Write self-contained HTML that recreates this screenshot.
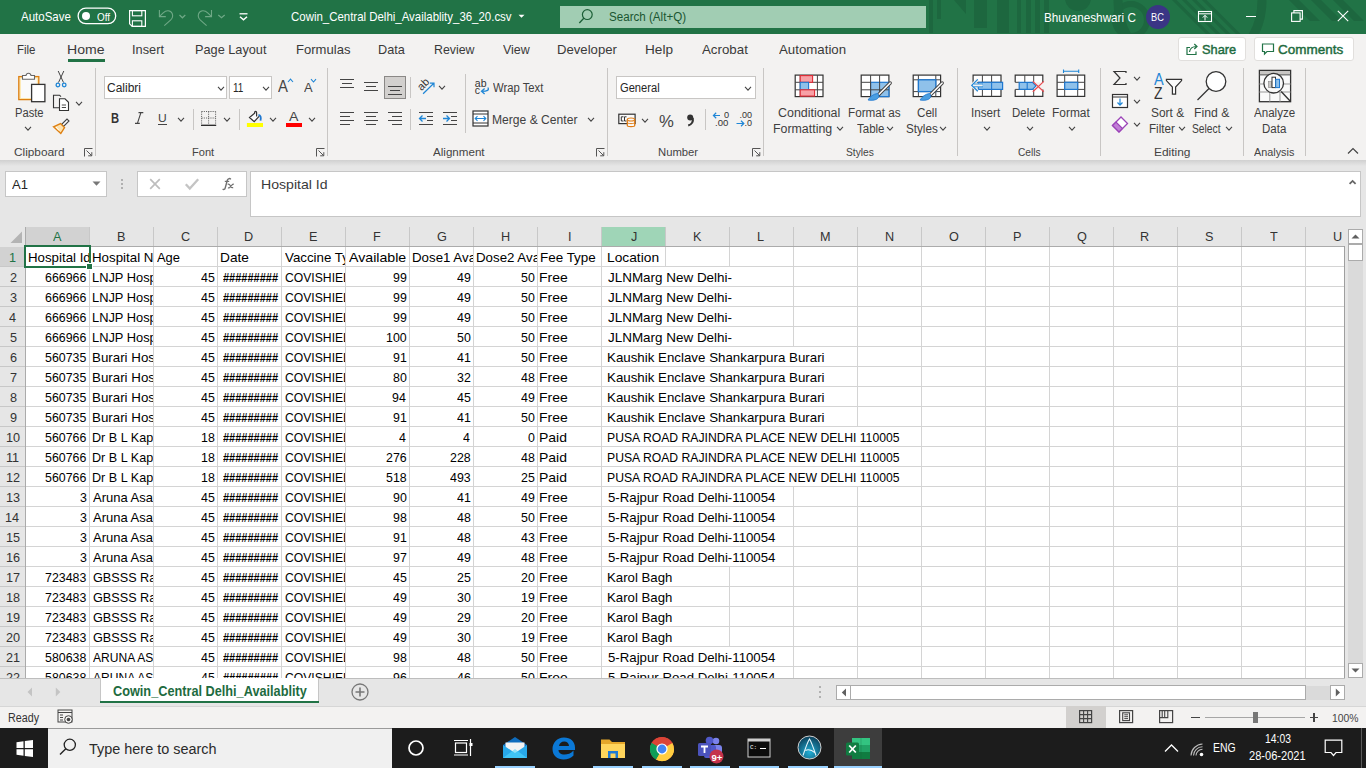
<!DOCTYPE html>
<html><head><meta charset="utf-8"><title>Excel</title>
<style>
html,body{margin:0;padding:0;width:1366px;height:768px;overflow:hidden;background:#fff;}
body{position:relative;font-family:'Liberation Sans', sans-serif;}
div,svg,span{box-sizing:border-box;}
body div{position:absolute;}
.t{position:absolute;white-space:pre;line-height:1;transform-origin:0 0;}
</style></head><body>
<div style="left:0px;top:0px;width:1366px;height:34px;background:#217346;"></div>
<div style="left:0px;top:34px;width:1366px;height:126px;background:#f3f2f1;"></div>
<div style="left:0px;top:160px;width:1366px;height:68px;background:#e6e6e6;"></div>
<div style="left:0;top:160px;width:1366px;height:6px;background:linear-gradient(#d0d0d0,#e6e6e6)"></div>
<div style="left:0px;top:227px;width:1366px;height:451px;background:#e6e6e6;"></div>
<div style="left:0px;top:678px;width:1366px;height:28px;background:#e6e6e6;"></div>
<div style="left:0px;top:706px;width:1366px;height:22px;background:#f3f2f1;"></div>
<div style="left:0px;top:728px;width:1366px;height:40px;background:#1c1c1c;"></div>
<svg style="position:absolute;left:0px;top:0px;" width="1366" height="34" viewBox="0 0 1366 34"><g opacity="0.85"><rect x="929" y="0" width="4" height="33" fill="#1d653e"/><rect x="937" y="0" width="4" height="19" fill="#1d653e"/><rect x="974" y="0" width="13" height="28" fill="#1d653e"/><rect x="997" y="0" width="12" height="33" fill="#1d653e"/><rect x="1017" y="0" width="4" height="33" fill="#1d653e"/><rect x="1026" y="0" width="5" height="33" fill="#1d653e"/><rect x="1035" y="0" width="5" height="33" fill="#1d653e"/><rect x="1044" y="0" width="5" height="33" fill="#1d653e"/><path d="M954 0 L966 0 L966 14 Z" fill="#1d653e"/><circle cx="1078" cy="-2" r="13" fill="#1d653e"/><circle cx="1131" cy="20" r="16" fill="none" stroke="#1d653e" stroke-width="6"/><path d="M1172 0 L1176.5 0 L1210.5 34 L1206 34 Z" fill="#1d653e"/><path d="M1182 0 L1186.5 0 L1220.5 34 L1216 34 Z" fill="#1d653e"/><path d="M1192 0 L1196.5 0 L1230.5 34 L1226 34 Z" fill="#1d653e"/><path d="M1202 0 L1206.5 0 L1240.5 34 L1236 34 Z" fill="#1d653e"/><circle cx="1190" cy="0.5" r="72" fill="none" stroke="#1d653e" stroke-width="9"/><path d="M1289 0 L1299 0 L1320 21 L1310 21 Z" fill="#1d653e"/><path d="M1311 0 L1321 0 L1342 21 L1332 21 Z" fill="#1d653e"/><path d="M1333 0 L1343 0 L1364 21 L1354 21 Z" fill="#1d653e"/></g></svg>
<span class="t" style="left:21.00px;top:10.30px;font-size:13px;color:#ffffff;transform:scaleX(0.8852);">AutoSave</span>
<svg style="position:absolute;left:77px;top:7px;" width="40" height="18" viewBox="0 0 40 18"><rect x="1.1" y="1.1" width="37.6" height="15.6" rx="7.8" fill="none" stroke="#fff" stroke-width="1.3"/><circle cx="9" cy="9" r="4" fill="#fff"/></svg>
<span class="t" style="left:97.10px;top:12.90px;font-size:10px;color:#ffffff;transform:scaleX(0.9868);">Off</span>
<svg style="position:absolute;left:128px;top:9px;" width="19" height="19" viewBox="0 0 19 19"><path d="M1.6 1.6 H17.4 V17.4 H4.2 L1.6 14.8 Z" fill="none" stroke="#fff" stroke-width="1.2"/><rect x="4.4" y="1.6" width="9.4" height="5.2" fill="none" stroke="#fff" stroke-width="1.1"/><rect x="4.4" y="11.8" width="9.4" height="5.6" fill="none" stroke="#fff" stroke-width="1.1"/></svg>
<svg style="position:absolute;left:150px;top:4px;" width="80" height="28" viewBox="0 0 80 28"><path d="M9.4 5.9 V12.6 H15.8" fill="none" stroke="#6fa886" stroke-width="1.1"/><path d="M9.8 12.2 L13.2 8.8 C16 6 20.5 5.8 22.2 9.5 C23.2 12 22.2 14.5 20.5 16.2 L14.3 21.7" fill="none" stroke="#6fa886" stroke-width="1.1"/><g transform="translate(70.9 0) scale(-1 1)"><path d="M9.4 5.9 V12.6 H15.8" fill="none" stroke="#6fa886" stroke-width="1.1"/><path d="M9.8 12.2 L13.2 8.8 C16 6 20.5 5.8 22.2 9.5 C23.2 12 22.2 14.5 20.5 16.2 L14.3 21.7" fill="none" stroke="#6fa886" stroke-width="1.1"/></g><path d="M29.5 11 L32.4 13.8 L35.3 11 M68.3 11 L71.5 13.8 L74.7 11" fill="none" stroke="#6fa886" stroke-width="1.2"/></svg>
<svg style="position:absolute;left:238px;top:12px;" width="11" height="10" viewBox="0 0 11 10"><path d="M1.5 1.8 H9.5" stroke="#fff" stroke-width="1.3"/><path d="M2 4.8 L5.5 7.8 L9 4.8" fill="none" stroke="#fff" stroke-width="1.5"/></svg>
<span class="t" style="left:291.00px;top:9.50px;font-size:13px;color:#ffffff;transform:scaleX(0.8804);">Cowin_Central Delhi_Availablity_36_20.csv</span>
<svg style="position:absolute;left:518px;top:14px;" width="7" height="5" viewBox="0 0 7 5"><path d="M0.5 0.8 H6.5 L3.5 3.8 Z" fill="#fff"/></svg>
<div style="left:560px;top:6px;width:366px;height:22px;background:#a1cdb3;"></div>
<svg style="position:absolute;left:577px;top:8px;" width="18" height="18" viewBox="0 0 18 18"><circle cx="10.3" cy="6.6" r="4.9" fill="none" stroke="#1b5e36" stroke-width="1.2"/><path d="M6.8 10.2 L2.3 15" stroke="#1b5e36" stroke-width="1.3"/></svg>
<span class="t" style="left:609.30px;top:10.50px;font-size:12.5px;color:#1b5631;transform:scaleX(0.9282);">Search (Alt+Q)</span>
<span class="t" style="left:1043.58px;top:11.80px;font-size:12.8px;color:#ffffff;transform:scaleX(0.9157);">Bhuvaneshwari C</span>
<svg style="position:absolute;left:1146px;top:5px;" width="24" height="24" viewBox="0 0 24 24"><circle cx="12" cy="12" r="12" fill="#3a3585"/></svg>
<span class="t" style="left:1151.30px;top:12.00px;font-size:11.3px;color:#ffffff;transform:scaleX(0.8175);">BC</span>
<svg style="position:absolute;left:1197px;top:10px;" width="16" height="13" viewBox="0 0 16 13"><rect x="1.5" y="1.5" width="13" height="10" fill="none" stroke="#fff" stroke-width="1.1"/><path d="M1.5 3.8 H14.5" stroke="#fff" stroke-width="1"/><path d="M8 10.5 V5.5 M5.8 7.6 L8 5.3 L10.2 7.6" fill="none" stroke="#fff" stroke-width="1"/></svg>
<div style="left:1246px;top:16px;width:10px;height:1px;background:#ffffff;"></div>
<svg style="position:absolute;left:1291px;top:10px;" width="12" height="12" viewBox="0 0 12 12"><rect x="0.6" y="2.9" width="8.5" height="8.5" fill="none" stroke="#fff" stroke-width="1.1"/><path d="M2.9 2.9 V0.6 H11.4 V9.1 H9.1" fill="none" stroke="#fff" stroke-width="1.1"/></svg>
<svg style="position:absolute;left:1337px;top:10px;" width="12" height="12" viewBox="0 0 12 12"><path d="M0.8 0.8 L11.2 11.2 M11.2 0.8 L0.8 11.2" stroke="#fff" stroke-width="1.1"/></svg>
<span class="t" style="left:16.70px;top:44.00px;font-size:12.8px;color:#3a3a3a;transform:scaleX(0.8973);">File</span>
<span class="t" style="left:67.40px;top:44.00px;font-size:12.8px;color:#3a3a3a;transform:scaleX(1.0994);">Home</span>
<span class="t" style="left:132.30px;top:44.00px;font-size:12.8px;color:#3a3a3a;transform:scaleX(0.9984);">Insert</span>
<span class="t" style="left:195.01px;top:44.00px;font-size:12.8px;color:#3a3a3a;transform:scaleX(0.9943);">Page Layout</span>
<span class="t" style="left:295.98px;top:44.00px;font-size:12.8px;color:#3a3a3a;transform:scaleX(1.0206);">Formulas</span>
<span class="t" style="left:378.01px;top:44.00px;font-size:12.8px;color:#3a3a3a;transform:scaleX(0.9921);">Data</span>
<span class="t" style="left:434.03px;top:44.00px;font-size:12.8px;color:#3a3a3a;transform:scaleX(0.9660);">Review</span>
<span class="t" style="left:503.00px;top:44.00px;font-size:12.8px;color:#3a3a3a;transform:scaleX(0.9730);">View</span>
<span class="t" style="left:556.97px;top:44.00px;font-size:12.8px;color:#3a3a3a;transform:scaleX(1.0264);">Developer</span>
<span class="t" style="left:644.94px;top:44.00px;font-size:12.8px;color:#3a3a3a;transform:scaleX(1.0634);">Help</span>
<span class="t" style="left:701.70px;top:44.00px;font-size:12.8px;color:#3a3a3a;transform:scaleX(1.0394);">Acrobat</span>
<span class="t" style="left:779.00px;top:44.00px;font-size:12.8px;color:#3a3a3a;transform:scaleX(1.0369);">Automation</span>
<div style="left:68px;top:59px;width:37px;height:3px;background:#217346;"></div>
<div style="left:1178px;top:37px;width:68px;height:24px;background:#fff;border:1px solid #e1dfdd;border-radius:3px"></div>
<div style="left:1254px;top:37px;width:100px;height:24px;background:#fff;border:1px solid #e1dfdd;border-radius:3px"></div>
<svg style="position:absolute;left:1185px;top:42px;" width="14" height="14" viewBox="0 0 14 14"><path d="M5 5.5 H2 V12.5 H11 V9.5" fill="none" stroke="#217346" stroke-width="1.2"/><path d="M4.5 10 C5 6 8 4.5 11.5 4.5 M9.3 2 L12 4.5 L9.3 7" fill="none" stroke="#217346" stroke-width="1.2"/></svg>
<span class="t" style="left:1202.00px;top:43.00px;font-size:13.5px;color:#1e6b40;transform:scaleX(0.9489);-webkit-text-stroke:0.45px #1e6b40">Share</span>
<svg style="position:absolute;left:1261px;top:42px;" width="14" height="14" viewBox="0 0 14 14"><path d="M1.5 2 H12.5 V9.5 H6 L3.5 12 V9.5 H1.5 Z" fill="none" stroke="#217346" stroke-width="1.2"/></svg>
<span class="t" style="left:1278.00px;top:43.00px;font-size:13.5px;color:#1e6b40;transform:scaleX(0.9982);-webkit-text-stroke:0.45px #1e6b40">Comments</span>
<div style="left:95px;top:68px;width:1px;height:88px;background:#c8c6c4;"></div>
<div style="left:327px;top:68px;width:1px;height:88px;background:#c8c6c4;"></div>
<div style="left:607px;top:68px;width:1px;height:88px;background:#c8c6c4;"></div>
<div style="left:763px;top:68px;width:1px;height:88px;background:#c8c6c4;"></div>
<div style="left:957px;top:68px;width:1px;height:88px;background:#c8c6c4;"></div>
<div style="left:1100px;top:68px;width:1px;height:88px;background:#c8c6c4;"></div>
<div style="left:1243px;top:68px;width:1px;height:88px;background:#c8c6c4;"></div>
<div style="left:1305px;top:68px;width:1px;height:88px;background:#c8c6c4;"></div>
<span class="t" style="left:14.30px;top:146.80px;font-size:11.5px;color:#444;transform:scaleX(1.0261);">Clipboard</span>
<span class="t" style="left:191.60px;top:146.80px;font-size:11.5px;color:#444;transform:scaleX(0.9615);">Font</span>
<span class="t" style="left:433.30px;top:146.80px;font-size:11.5px;color:#444;transform:scaleX(1.0088);">Alignment</span>
<span class="t" style="left:657.50px;top:146.80px;font-size:11.5px;color:#444;transform:scaleX(0.9812);">Number</span>
<span class="t" style="left:846.40px;top:146.80px;font-size:11.5px;color:#444;transform:scaleX(0.8902);">Styles</span>
<span class="t" style="left:1017.60px;top:146.80px;font-size:11.5px;color:#444;transform:scaleX(0.8872);">Cells</span>
<span class="t" style="left:1153.50px;top:146.80px;font-size:11.5px;color:#444;transform:scaleX(1.0383);">Editing</span>
<span class="t" style="left:1253.80px;top:146.80px;font-size:11.5px;color:#444;transform:scaleX(0.9426);">Analysis</span>
<svg style="position:absolute;left:84px;top:147.5px;" width="9" height="9" viewBox="0 0 9 9"><path d="M0.5 8.5 V0.5 H8.5" fill="none" stroke="#555" stroke-width="1"/><path d="M2.5 2.5 L7.8 7.8 M4.2 7.8 H7.8 V4.2" fill="none" stroke="#555" stroke-width="1"/></svg>
<svg style="position:absolute;left:316px;top:147.5px;" width="9" height="9" viewBox="0 0 9 9"><path d="M0.5 8.5 V0.5 H8.5" fill="none" stroke="#555" stroke-width="1"/><path d="M2.5 2.5 L7.8 7.8 M4.2 7.8 H7.8 V4.2" fill="none" stroke="#555" stroke-width="1"/></svg>
<svg style="position:absolute;left:596px;top:147.5px;" width="9" height="9" viewBox="0 0 9 9"><path d="M0.5 8.5 V0.5 H8.5" fill="none" stroke="#555" stroke-width="1"/><path d="M2.5 2.5 L7.8 7.8 M4.2 7.8 H7.8 V4.2" fill="none" stroke="#555" stroke-width="1"/></svg>
<svg style="position:absolute;left:752px;top:147.5px;" width="9" height="9" viewBox="0 0 9 9"><path d="M0.5 8.5 V0.5 H8.5" fill="none" stroke="#555" stroke-width="1"/><path d="M2.5 2.5 L7.8 7.8 M4.2 7.8 H7.8 V4.2" fill="none" stroke="#555" stroke-width="1"/></svg>
<svg style="position:absolute;left:1347px;top:147px;" width="12" height="8" viewBox="0 0 12 8"><path d="M1 6.5 L6 1.5 L11 6.5" fill="none" stroke="#444" stroke-width="1.2"/></svg>
<svg style="position:absolute;left:16px;top:70px;" width="32" height="34" viewBox="0 0 32 34"><rect x="2.8" y="6.6" width="20" height="23" fill="#fde9b4" stroke="#dc7f12" stroke-width="1.3"/><rect x="5" y="8.5" width="15.8" height="19.5" fill="#fafafa"/><path d="M6.5 9.2 V5.5 H10 C10.5 2.5 14.5 2.5 15 5.5 H18.5 V9.2 Z" fill="#fff" stroke="#666" stroke-width="1.1"/><rect x="15.6" y="14.4" width="13.3" height="17.3" fill="#fff" stroke="#333" stroke-width="1.3"/></svg>
<span class="t" style="left:14.71px;top:106.60px;font-size:12.5px;color:#404040;transform:scaleX(0.8932);">Paste</span>
<svg style="position:absolute;left:24.4px;top:125.8px;" width="8" height="5.2" viewBox="0 0 8 5.2"><path d="M1 1 L4.0 4.2 L7 1" fill="none" stroke="#444" stroke-width="1.1"/></svg>
<svg style="position:absolute;left:54px;top:70px;" width="14" height="18" viewBox="0 0 14 18"><path d="M4.2 1 L9.5 12.5 M9.8 1 L4.5 12.5" stroke="#444" stroke-width="1"/><circle cx="3.9" cy="15" r="1.8" fill="none" stroke="#1f86d6" stroke-width="1.3"/><circle cx="10.2" cy="15" r="1.8" fill="none" stroke="#1f86d6" stroke-width="1.3"/></svg>
<svg style="position:absolute;left:52px;top:94px;" width="18" height="18" viewBox="0 0 18 18"><path d="M8.5 13.8 H1.5 V1.2 H7.5 L9 2.7" fill="none" stroke="#333" stroke-width="1.1"/><path d="M7.5 4.8 H13 L16.5 8.3 V16.5 H7.5 Z" fill="#fff" stroke="#333" stroke-width="1.1"/><path d="M9.8 11 H14 M9.8 13.5 H14" stroke="#333" stroke-width="0.9"/></svg>
<svg style="position:absolute;left:74.5px;top:101px;" width="8" height="5.2" viewBox="0 0 8 5.2"><path d="M1 1 L4.0 4.2 L7 1" fill="none" stroke="#444" stroke-width="1.1"/></svg>
<svg style="position:absolute;left:52px;top:117px;" width="18" height="18" viewBox="0 0 18 18"><path d="M9.5 7.5 L15 2 L17 4 L11.5 9.5 Z" fill="#fff" stroke="#444" stroke-width="1.1"/><path d="M1.5 9.8 L8.5 6.5 L12.5 10.5 L8.8 16.5 Z" fill="#fde3b0" stroke="#de7f10" stroke-width="1.4"/><path d="M4 10 L7 13.5" stroke="#fff" stroke-width="1"/></svg>
<div style="left:104px;top:76px;width:123px;height:23px;background:#fff;border:1px solid #c8c6c4"></div>
<span class="t" style="left:107.40px;top:81.60px;font-size:12px;color:#262626;transform:scaleX(0.9987);">Calibri</span>
<svg style="position:absolute;left:216.6px;top:85.6px;" width="8" height="5.2" viewBox="0 0 8 5.2"><path d="M1 1 L4.0 4.2 L7 1" fill="none" stroke="#444" stroke-width="1.1"/></svg>
<div style="left:229px;top:76px;width:43px;height:23px;background:#fff;border:1px solid #c8c6c4"></div>
<span class="t" style="left:232.80px;top:81.60px;font-size:12px;color:#262626;transform:scaleX(0.8292);">11</span>
<svg style="position:absolute;left:261.6px;top:85.6px;" width="8" height="5.2" viewBox="0 0 8 5.2"><path d="M1 1 L4.0 4.2 L7 1" fill="none" stroke="#444" stroke-width="1.1"/></svg>
<span class="t" style="left:278.10px;top:77.60px;font-size:17px;color:#444;transform:scaleX(0.8750);">A</span>
<svg style="position:absolute;left:287px;top:78px;" width="7" height="5" viewBox="0 0 7 5"><path d="M1 4 L3.5 1.2 L6 4" fill="none" stroke="#1f86d6" stroke-width="1.1"/></svg>
<span class="t" style="left:303.80px;top:81.60px;font-size:12px;color:#444;transform:scaleX(1.0750);">A</span>
<svg style="position:absolute;left:310px;top:78px;" width="7" height="5" viewBox="0 0 7 5"><path d="M1 1.2 L3.5 4 L6 1.2" fill="none" stroke="#1f86d6" stroke-width="1.1"/></svg>
<span class="t" style="left:111.30px;top:111.00px;font-size:14px;color:#333;font-weight:700;transform:scaleX(0.8000);">B</span>
<svg style="position:absolute;left:133px;top:111px;" width="12" height="14" viewBox="0 0 12 14"><path d="M5.5 1.6 H10.3 M2 12.4 H6.8 M7.9 1.6 L4.4 12.4" fill="none" stroke="#444" stroke-width="1.1"/></svg>
<span class="t" style="left:158.20px;top:112.70px;font-size:11.5px;color:#444;transform:scaleX(1.0500);">U</span>
<div style="left:158px;top:124px;width:9px;height:1.2px;background:#444;"></div>
<svg style="position:absolute;left:176.5px;top:117.2px;" width="8" height="5.2" viewBox="0 0 8 5.2"><path d="M1 1 L4.0 4.2 L7 1" fill="none" stroke="#444" stroke-width="1.1"/></svg>
<div style="left:193px;top:109px;width:1px;height:21px;background:#c8c6c4;"></div>
<svg style="position:absolute;left:200px;top:110px;" width="17" height="17" viewBox="0 0 17 17"><path d="M1.6 1.5 H15.6 M1.6 1.5 V14.5 M15.6 1.5 V14.5 M8.6 1.5 V14.5 M1.6 8 H15.6" fill="none" stroke="#555" stroke-width="0.9" stroke-dasharray="1.1 1.1"/><path d="M1 15.3 H16.2" stroke="#222" stroke-width="1.3"/></svg>
<svg style="position:absolute;left:222.5px;top:117.2px;" width="8" height="5.2" viewBox="0 0 8 5.2"><path d="M1 1 L4.0 4.2 L7 1" fill="none" stroke="#444" stroke-width="1.1"/></svg>
<div style="left:239px;top:109px;width:1px;height:21px;background:#c8c6c4;"></div>
<svg style="position:absolute;left:245px;top:108px;" width="20" height="20" viewBox="0 0 20 20"><path d="M4.5 9.5 L9.6 5.3 L14.3 8.2 L9.2 13.6 Z" fill="#fafafa"/><path d="M11.6 8.5 V4.5 C11.6 3.1 9.6 3.1 9.6 4.5 V5.3 L4.5 9.5 L9.2 13.6 L14.3 8.2" fill="none" stroke="#333" stroke-width="1.2"/><path d="M13.5 7 C15.5 7.2 16.3 9 15.5 12.6" fill="none" stroke="#1f78d0" stroke-width="1.8"/><rect x="1.9" y="15" width="16.1" height="4" fill="#ffff00"/></svg>
<svg style="position:absolute;left:268.5px;top:117.2px;" width="8" height="5.2" viewBox="0 0 8 5.2"><path d="M1 1 L4.0 4.2 L7 1" fill="none" stroke="#444" stroke-width="1.1"/></svg>
<span class="t" style="left:289.20px;top:110.40px;font-size:13px;color:#444;transform:scaleX(1.0889);">A</span>
<div style="left:286px;top:123px;width:16px;height:3.5px;background:#ff0000;"></div>
<svg style="position:absolute;left:307.5px;top:117.2px;" width="8" height="5.2" viewBox="0 0 8 5.2"><path d="M1 1 L4.0 4.2 L7 1" fill="none" stroke="#444" stroke-width="1.1"/></svg>
<div style="left:340px;top:78.8px;width:14px;height:1.3px;background:#444;"></div>
<div style="left:342px;top:82.9px;width:10px;height:1.3px;background:#444;"></div>
<div style="left:340px;top:87px;width:14px;height:1.3px;background:#444;"></div>
<div style="left:364px;top:81.8px;width:14px;height:1.3px;background:#444;"></div>
<div style="left:366px;top:85.9px;width:10px;height:1.3px;background:#444;"></div>
<div style="left:364px;top:90px;width:14px;height:1.3px;background:#444;"></div>
<div style="left:384px;top:76px;width:22px;height:23px;background:#d2d0ce;border:1px solid #8a8886"></div>
<div style="left:388px;top:85.9px;width:14px;height:1.3px;background:#444;"></div>
<div style="left:390px;top:90px;width:10px;height:1.3px;background:#444;"></div>
<div style="left:388px;top:94px;width:14px;height:1.3px;background:#444;"></div>
<div style="left:410px;top:77px;width:1px;height:21px;background:#c8c6c4;"></div>
<svg style="position:absolute;left:416px;top:77px;" width="20" height="20" viewBox="0 0 20 20"><text x="0" y="0" transform="translate(5.4 14.2) rotate(-45)" font-family="Liberation Sans" font-size="11" fill="#333">ab</text><path d="M7.1 16.7 L17.6 6.5 M13.9 6.1 H18 V10.2" fill="none" stroke="#1f86d6" stroke-width="1.2"/></svg>
<svg style="position:absolute;left:437.6px;top:85px;" width="8" height="5.2" viewBox="0 0 8 5.2"><path d="M1 1 L4.0 4.2 L7 1" fill="none" stroke="#444" stroke-width="1.1"/></svg>
<div style="left:340px;top:111.8px;width:14px;height:1.3px;background:#444;"></div>
<div style="left:340px;top:115.8px;width:10px;height:1.3px;background:#444;"></div>
<div style="left:340px;top:119.8px;width:14px;height:1.3px;background:#444;"></div>
<div style="left:340px;top:123.8px;width:10px;height:1.3px;background:#444;"></div>
<div style="left:364px;top:111.8px;width:14px;height:1.3px;background:#444;"></div>
<div style="left:366px;top:115.8px;width:10px;height:1.3px;background:#444;"></div>
<div style="left:364px;top:119.8px;width:14px;height:1.3px;background:#444;"></div>
<div style="left:366px;top:123.8px;width:10px;height:1.3px;background:#444;"></div>
<div style="left:388px;top:111.8px;width:14px;height:1.3px;background:#444;"></div>
<div style="left:392px;top:115.8px;width:10px;height:1.3px;background:#444;"></div>
<div style="left:388px;top:119.8px;width:14px;height:1.3px;background:#444;"></div>
<div style="left:392px;top:123.8px;width:10px;height:1.3px;background:#444;"></div>
<div style="left:410px;top:109px;width:1px;height:21px;background:#c8c6c4;"></div>
<div style="left:419px;top:111.8px;width:14px;height:1.3px;background:#444;"></div>
<div style="left:427px;top:115.8px;width:6px;height:1.3px;background:#444;"></div>
<div style="left:427px;top:119.8px;width:6px;height:1.3px;background:#444;"></div>
<div style="left:419px;top:123.8px;width:14px;height:1.3px;background:#444;"></div>
<svg style="position:absolute;left:418px;top:114px;" width="9" height="9" viewBox="0 0 9 9"><path d="M8 4.5 H1.5 M4.5 1.5 L1.5 4.5 L4.5 7.5" fill="none" stroke="#1f86d6" stroke-width="1.3"/></svg>
<div style="left:443px;top:111.8px;width:14px;height:1.3px;background:#444;"></div>
<div style="left:451px;top:115.8px;width:6px;height:1.3px;background:#444;"></div>
<div style="left:451px;top:119.8px;width:6px;height:1.3px;background:#444;"></div>
<div style="left:443px;top:123.8px;width:14px;height:1.3px;background:#444;"></div>
<svg style="position:absolute;left:442px;top:114px;" width="9" height="9" viewBox="0 0 9 9"><path d="M1 4.5 H7.5 M4.5 1.5 L7.5 4.5 L4.5 7.5" fill="none" stroke="#1f86d6" stroke-width="1.3"/></svg>
<div style="left:465px;top:74px;width:1px;height:59px;background:#c8c6c4;"></div>
<svg style="position:absolute;left:474px;top:77px;" width="16" height="18" viewBox="0 0 16 18"><text x="0.8" y="9.6" font-family="Liberation Sans" font-size="10.5" fill="#333">ab</text><text x="0.8" y="16.6" font-family="Liberation Sans" font-size="10.5" fill="#333">c</text><path d="M13.8 10.5 C15.5 13 13.5 14.3 7.8 14.3 M10.6 11.5 L7.5 14.3 L10.6 17.1" fill="none" stroke="#1f86d6" stroke-width="1.3"/></svg>
<span class="t" style="left:492.70px;top:82.00px;font-size:12.5px;color:#404040;transform:scaleX(0.9016);">Wrap Text</span>
<svg style="position:absolute;left:472px;top:110px;" width="17" height="17" viewBox="0 0 17 17"><rect x="1" y="1" width="15" height="15" fill="#fff" stroke="#333" stroke-width="1.2"/><path d="M1 4 H16 M1 13 H16" stroke="#333" stroke-width="1"/><path d="M3 8.5 H14 M5.5 6.2 L3.2 8.5 L5.5 10.8 M11.5 6.2 L13.8 8.5 L11.5 10.8" fill="none" stroke="#1f86d6" stroke-width="1.1"/></svg>
<span class="t" style="left:491.73px;top:113.50px;font-size:12.5px;color:#404040;transform:scaleX(0.9682);">Merge &amp; Center</span>
<svg style="position:absolute;left:586.5px;top:116.5px;" width="8" height="5.2" viewBox="0 0 8 5.2"><path d="M1 1 L4.0 4.2 L7 1" fill="none" stroke="#444" stroke-width="1.1"/></svg>
<div style="left:616px;top:76px;width:140px;height:23px;background:#fff;border:1px solid #c8c6c4"></div>
<span class="t" style="left:619.50px;top:81.60px;font-size:12px;color:#262626;transform:scaleX(0.9280);">General</span>
<svg style="position:absolute;left:744px;top:86px;" width="8" height="5.2" viewBox="0 0 8 5.2"><path d="M1 1 L4.0 4.2 L7 1" fill="none" stroke="#444" stroke-width="1.1"/></svg>
<svg style="position:absolute;left:617px;top:112px;" width="20" height="16" viewBox="0 0 20 16"><rect x="1.8" y="2.2" width="16.3" height="9.4" fill="#fafafa" stroke="#333" stroke-width="1.2"/><path d="M6.5 4.8 H4.3 V9 H6.5 M9.5 4.8 H7.5 V9 H9.5" fill="none" stroke="#333" stroke-width="1"/><path d="M10.3 7.5 V13.5 C10.3 15 17.7 15 17.7 13.5 V7.5" fill="#fafafa" stroke="#e07a10" stroke-width="1.2"/><ellipse cx="14" cy="7.5" rx="3.7" ry="1.5" fill="#fafafa" stroke="#e07a10" stroke-width="1.1"/><path d="M10.3 10.5 C10.3 12 17.7 12 17.7 10.5" fill="none" stroke="#e07a10" stroke-width="1"/></svg>
<svg style="position:absolute;left:640.5px;top:117.5px;" width="8" height="5.2" viewBox="0 0 8 5.2"><path d="M1 1 L4.0 4.2 L7 1" fill="none" stroke="#444" stroke-width="1.1"/></svg>
<span class="t" style="left:658.60px;top:113.50px;font-size:16px;color:#444;transform:scaleX(1.0429);">%</span>
<svg style="position:absolute;left:685px;top:112px;" width="12" height="16" viewBox="0 0 12 16"><circle cx="5.2" cy="5.5" r="3" fill="#333"/><path d="M7.8 6 C8.5 10 6.5 12.5 3.2 13.5" fill="none" stroke="#333" stroke-width="2"/></svg>
<div style="left:705px;top:109px;width:1px;height:21px;background:#c8c6c4;"></div>
<svg style="position:absolute;left:711px;top:111px;" width="20" height="18" viewBox="0 0 20 18"><path d="M9 4.5 H2.5 M5.2 1.8 L2.4 4.5 L5.2 7.2" fill="none" stroke="#1f86d6" stroke-width="1.2"/></svg>
<span class="t" style="left:723.50px;top:110.60px;font-size:9px;color:#333;transform:scaleX(1.0200);">0</span>
<span class="t" style="left:715.30px;top:118.80px;font-size:9px;color:#333;transform:scaleX(1.0635);">.00</span>
<span class="t" style="left:739.50px;top:110.60px;font-size:9px;color:#333;">.00</span>
<svg style="position:absolute;left:735px;top:119px;" width="20" height="10" viewBox="0 0 20 10"><path d="M1.5 4.5 H8.5 M6 1.8 L8.8 4.5 L6 7.2" fill="none" stroke="#1f86d6" stroke-width="1.2"/></svg>
<span class="t" style="left:744.50px;top:118.80px;font-size:9px;color:#333;">.0</span>
<svg style="position:absolute;left:793px;top:73px;" width="32" height="26" viewBox="0 0 32 26"><rect x="2.2" y="2.1" width="27.8" height="21.5" fill="#fff" stroke="#333" stroke-width="1.2"/><path d="M2.2 9.3 H30 M2.2 16.8 H30 M24.4 2.1 V23.6 M7.2 2.1 V23.6" stroke="#444" stroke-width="1"/><rect x="7.2" y="2.6" width="12.4" height="6.7" fill="#f7a1a6" stroke="#e02b35" stroke-width="1.1"/><rect x="7.2" y="9.3" width="8.4" height="7.5" fill="#8fc1ea" stroke="#1f78d0" stroke-width="1.1"/><rect x="7.2" y="16.8" width="14.4" height="6.3" fill="#f7a1a6" stroke="#e02b35" stroke-width="1.1"/></svg>
<span class="t" style="left:778.30px;top:107.00px;font-size:12.5px;color:#404040;transform:scaleX(0.9957);">Conditional</span>
<span class="t" style="left:773.31px;top:122.60px;font-size:12.5px;color:#404040;transform:scaleX(0.9900);">Formatting</span>
<svg style="position:absolute;left:836px;top:126.3px;" width="8" height="5.2" viewBox="0 0 8 5.2"><path d="M1 1 L4.0 4.2 L7 1" fill="none" stroke="#444" stroke-width="1.1"/></svg>
<svg style="position:absolute;left:860px;top:73px;" width="34" height="30" viewBox="0 0 34 30"><rect x="1.2" y="2.1" width="27.7" height="21.5" fill="#fff" stroke="#333" stroke-width="1.2"/><rect x="10.6" y="9.3" width="18.3" height="14.3" fill="#8fc1ea" stroke="#1f78d0" stroke-width="1.2"/><path d="M1.2 9.3 H10.6 M1.2 16.8 H28.9 M10.6 2.1 V23.6 M19.6 2.1 V23.6" stroke="#444" stroke-width="1"/><path d="M30.2 10 L19 21.3" stroke="#444" stroke-width="3.4" stroke-linecap="round"/><path d="M30.2 10 L19 21.3" stroke="#fff" stroke-width="1.5" stroke-linecap="round"/><path d="M8 27 C10 24 13 21 17.5 20.5 C19.5 22 19.5 25 16 26.5 C13.5 27.5 10.5 27.5 8 27 Z" fill="#4a9ee0" stroke="#1f78d0" stroke-width="0.8"/></svg>
<span class="t" style="left:848.36px;top:107.00px;font-size:12.5px;color:#404040;transform:scaleX(0.9362);">Format as</span>
<span class="t" style="left:857.00px;top:122.60px;font-size:12.5px;color:#404040;transform:scaleX(0.9188);">Table</span>
<svg style="position:absolute;left:886px;top:126.3px;" width="8" height="5.2" viewBox="0 0 8 5.2"><path d="M1 1 L4.0 4.2 L7 1" fill="none" stroke="#444" stroke-width="1.1"/></svg>
<svg style="position:absolute;left:912px;top:73px;" width="34" height="30" viewBox="0 0 34 30"><rect x="1.2" y="2.1" width="27.4" height="21.5" fill="#fff" stroke="#333" stroke-width="1.2"/><path d="M1.2 6.8 H28.6 M1.2 18.6 H28.6 M6.4 2.1 V23.6 M23.8 2.1 V23.6" stroke="#444" stroke-width="1"/><rect x="6.4" y="6.8" width="17.4" height="11.8" fill="#8fc1ea" stroke="#1f78d0" stroke-width="1.3"/><path d="M30.2 10 L19 21.3" stroke="#444" stroke-width="3.4" stroke-linecap="round"/><path d="M30.2 10 L19 21.3" stroke="#fff" stroke-width="1.5" stroke-linecap="round"/><path d="M8 27 C10 24 13 21 17.5 20.5 C19.5 22 19.5 25 16 26.5 C13.5 27.5 10.5 27.5 8 27 Z" fill="#4a9ee0" stroke="#1f78d0" stroke-width="0.8"/></svg>
<span class="t" style="left:917.40px;top:107.00px;font-size:12.5px;color:#404040;transform:scaleX(0.9298);">Cell</span>
<span class="t" style="left:906.00px;top:122.60px;font-size:12.5px;color:#404040;transform:scaleX(0.9322);">Styles</span>
<svg style="position:absolute;left:939px;top:126.3px;" width="8" height="5.2" viewBox="0 0 8 5.2"><path d="M1 1 L4.0 4.2 L7 1" fill="none" stroke="#444" stroke-width="1.1"/></svg>
<svg style="position:absolute;left:971px;top:74px;" width="34" height="24" viewBox="0 0 34 24"><rect x="2.1" y="1.1" width="27.9" height="21.3" fill="#fff" stroke="#333" stroke-width="1.2"/><path d="M2.1 8.3 H30 M2.1 15.4 H30 M11.4 1.1 V22.4 M20.6 1.1 V22.4" stroke="#444" stroke-width="1"/><rect x="7.3" y="8.3" width="24.3" height="7.1" fill="#8fc1ea" stroke="#1f78d0" stroke-width="1.2"/><path d="M20.6 8.3 V15.4" stroke="#1f78d0" stroke-width="1.1"/><path d="M11.4 11.4 H1.2 M6.8 5.4 L0.8 11.4 L6.8 17.3" fill="none" stroke="#f3f2f1" stroke-width="3.2"/><path d="M12 10 H3 M12 12.8 H3" stroke="#1f86d6" stroke-width="0.9"/><path d="M6.8 5.4 L0.8 11.4 L6.8 17.3" fill="none" stroke="#1f86d6" stroke-width="1.2"/></svg>
<span class="t" style="left:971.37px;top:107.00px;font-size:12.5px;color:#404040;transform:scaleX(0.9321);">Insert</span>
<svg style="position:absolute;left:982.5px;top:126.3px;" width="8" height="5.2" viewBox="0 0 8 5.2"><path d="M1 1 L4.0 4.2 L7 1" fill="none" stroke="#444" stroke-width="1.1"/></svg>
<svg style="position:absolute;left:1014px;top:74px;" width="34" height="24" viewBox="0 0 34 24"><rect x="1.2" y="1.1" width="27.6" height="7.2" fill="#fff"/><rect x="1.2" y="15.4" width="27.6" height="7" fill="#fff"/><path d="M1.2 8.3 V1.1 H28.8 V8.3 M1.2 15.4 V22.4 H28.8 V15.4" fill="none" stroke="#333" stroke-width="1.2"/><path d="M10.8 1.1 V8.3 M19.7 1.1 V8.3 M10.8 15.4 V22.4 M19.7 15.4 V22.4 M1.2 8.3 H5.2 M1.2 15.4 H5.2" stroke="#444" stroke-width="1"/><path d="M5.2 8.3 H18.5 L22 11.85 L18.5 15.4 H5.2 Z" fill="#8fc1ea" stroke="#1f78d0" stroke-width="1.2"/><path d="M13.2 8.3 V15.4" stroke="#1f78d0" stroke-width="1.1"/><path d="M18.8 7.4 L29.8 17.8 M29.8 7.4 L18.8 17.8" stroke="#ea4a50" stroke-width="1.2"/></svg>
<span class="t" style="left:1011.78px;top:107.00px;font-size:12.5px;color:#404040;transform:scaleX(0.9181);">Delete</span>
<svg style="position:absolute;left:1025.5px;top:126.3px;" width="8" height="5.2" viewBox="0 0 8 5.2"><path d="M1 1 L4.0 4.2 L7 1" fill="none" stroke="#444" stroke-width="1.1"/></svg>
<svg style="position:absolute;left:1056px;top:74px;" width="32" height="24" viewBox="0 0 32 24"><rect x="1.1" y="1.1" width="27.6" height="21.3" fill="#fff" stroke="#333" stroke-width="1.2"/><path d="M1.1 8.3 H28.7 M1.1 15.4 H28.7 M8.7 1.1 V22.4 M21.7 1.1 V22.4" stroke="#444" stroke-width="1"/><rect x="8.7" y="8.3" width="13" height="7.1" fill="#8fc1ea" stroke="#1f78d0" stroke-width="1.2"/></svg>
<svg style="position:absolute;left:1062px;top:69px;" width="18" height="5" viewBox="0 0 18 5"><path d="M1.5 0.5 V4 M16.7 0.5 V4 M1.5 2.3 H16.7" stroke="#1f86d6" stroke-width="1.1"/></svg>
<span class="t" style="left:1051.55px;top:107.00px;font-size:12.5px;color:#404040;transform:scaleX(0.9536);">Format</span>
<svg style="position:absolute;left:1067.5px;top:126.3px;" width="8" height="5.2" viewBox="0 0 8 5.2"><path d="M1 1 L4.0 4.2 L7 1" fill="none" stroke="#444" stroke-width="1.1"/></svg>
<svg style="position:absolute;left:1112px;top:70px;" width="16" height="16" viewBox="0 0 16 16"><path d="M14 3 V1.5 H2 L8 8 L2 14.5 H14 V13" fill="none" stroke="#333" stroke-width="1.2"/></svg>
<svg style="position:absolute;left:1133px;top:75.5px;" width="8" height="5.2" viewBox="0 0 8 5.2"><path d="M1 1 L4.0 4.2 L7 1" fill="none" stroke="#444" stroke-width="1.1"/></svg>
<svg style="position:absolute;left:1111px;top:93px;" width="18" height="16" viewBox="0 0 18 16"><rect x="1.5" y="1.5" width="15" height="13" fill="#fff" stroke="#333" stroke-width="1.2"/><path d="M1.5 4 H16.5" stroke="#333" stroke-width="1"/><path d="M9 5.5 V12 M6.5 9.5 L9 12.2 L11.5 9.5" fill="none" stroke="#1f86d6" stroke-width="1.2"/></svg>
<svg style="position:absolute;left:1133px;top:98.5px;" width="8" height="5.2" viewBox="0 0 8 5.2"><path d="M1 1 L4.0 4.2 L7 1" fill="none" stroke="#444" stroke-width="1.1"/></svg>
<svg style="position:absolute;left:1111px;top:115px;" width="18" height="18" viewBox="0 0 18 18"><path d="M1.5 10.5 L10 2 L16.5 8.5 L8 17 Z" fill="#fff" stroke="#9b43b8" stroke-width="1.3"/><path d="M1.5 10.5 L5 7 L11.5 13.5 L8 17 Z" fill="#c17fd6" stroke="#9b43b8" stroke-width="1.2"/></svg>
<svg style="position:absolute;left:1133px;top:122px;" width="8" height="5.2" viewBox="0 0 8 5.2"><path d="M1 1 L4.0 4.2 L7 1" fill="none" stroke="#444" stroke-width="1.1"/></svg>
<span class="t" style="left:1154.00px;top:71.60px;font-size:16px;color:#1f86d6;transform:scaleX(0.9091);">A</span>
<span class="t" style="left:1154.30px;top:85.80px;font-size:16px;color:#333;transform:scaleX(0.8700);">Z</span>
<svg style="position:absolute;left:1164px;top:77px;" width="20" height="19" viewBox="0 0 20 19"><path d="M2.4 2.3 H17.6 V3.6 L11.6 10 V17.2 H8.4 V10 L2.4 3.6 Z" fill="#fafafa" stroke="#333" stroke-width="1.2"/></svg>
<span class="t" style="left:1151.00px;top:106.70px;font-size:12.5px;color:#404040;transform:scaleX(0.9520);">Sort &amp;</span>
<span class="t" style="left:1148.77px;top:122.80px;font-size:12.5px;color:#404040;transform:scaleX(0.9318);">Filter</span>
<svg style="position:absolute;left:1178px;top:126.3px;" width="8" height="5.2" viewBox="0 0 8 5.2"><path d="M1 1 L4.0 4.2 L7 1" fill="none" stroke="#444" stroke-width="1.1"/></svg>
<svg style="position:absolute;left:1196px;top:71px;" width="32" height="31" viewBox="0 0 32 31"><circle cx="20" cy="10.5" r="9.8" fill="#fff" stroke="#333" stroke-width="1.3"/><path d="M13 17.5 L1.5 29" stroke="#333" stroke-width="1.3"/></svg>
<span class="t" style="left:1193.52px;top:106.70px;font-size:12.5px;color:#404040;transform:scaleX(0.9779);">Find &amp;</span>
<span class="t" style="left:1191.50px;top:122.80px;font-size:12.5px;color:#404040;transform:scaleX(0.8223);">Select</span>
<svg style="position:absolute;left:1225px;top:126.3px;" width="8" height="5.2" viewBox="0 0 8 5.2"><path d="M1 1 L4.0 4.2 L7 1" fill="none" stroke="#444" stroke-width="1.1"/></svg>
<svg style="position:absolute;left:1257px;top:69px;" width="36" height="35" viewBox="0 0 36 35"><rect x="2.4" y="1.4" width="31.2" height="31.3" fill="#fafafa" stroke="#333" stroke-width="1.3"/><rect x="3" y="2" width="30" height="3.9" fill="#c8c6c4"/><path d="M2.4 5.9 H33.6" stroke="#555" stroke-width="1"/><path d="M2.4 15 H33.6 M2.4 23 H33.6 M12.8 23 V32.7 M23 23 V32.7" stroke="#999" stroke-width="1"/><circle cx="16.7" cy="14.2" r="9.8" fill="#fafafa" stroke="#333" stroke-width="1.3"/><rect x="11.5" y="12.6" width="3.1" height="6" fill="#c8c6c4" stroke="#888" stroke-width="0.6"/><rect x="15" y="8.2" width="3.5" height="10.4" fill="#fff" stroke="#333" stroke-width="1"/><rect x="18.7" y="10.3" width="3.8" height="8.3" fill="#8fc1ea" stroke="#1f78d0" stroke-width="1"/><path d="M24.2 22.6 L33.6 32.4" stroke="#333" stroke-width="1.4"/></svg>
<span class="t" style="left:1253.80px;top:106.70px;font-size:12.5px;color:#404040;transform:scaleX(0.9255);">Analyze</span>
<span class="t" style="left:1262.28px;top:122.80px;font-size:12.5px;color:#404040;transform:scaleX(0.9194);">Data</span>
<div style="left:26px;top:247px;width:1318px;height:431px;background:#ffffff;"></div>
<div style="left:89px;top:247px;width:1px;height:19px;background:#d4d4d4;"></div>
<div style="left:153px;top:247px;width:1px;height:19px;background:#d4d4d4;"></div>
<div style="left:217px;top:247px;width:1px;height:19px;background:#d4d4d4;"></div>
<div style="left:281px;top:247px;width:1px;height:19px;background:#d4d4d4;"></div>
<div style="left:345px;top:247px;width:1px;height:19px;background:#d4d4d4;"></div>
<div style="left:409px;top:247px;width:1px;height:19px;background:#d4d4d4;"></div>
<div style="left:473px;top:247px;width:1px;height:19px;background:#d4d4d4;"></div>
<div style="left:537px;top:247px;width:1px;height:19px;background:#d4d4d4;"></div>
<div style="left:601px;top:247px;width:1px;height:19px;background:#d4d4d4;"></div>
<div style="left:665px;top:247px;width:1px;height:19px;background:#d4d4d4;"></div>
<div style="left:729px;top:247px;width:1px;height:19px;background:#d4d4d4;"></div>
<div style="left:793px;top:247px;width:1px;height:19px;background:#d4d4d4;"></div>
<div style="left:857px;top:247px;width:1px;height:19px;background:#d4d4d4;"></div>
<div style="left:921px;top:247px;width:1px;height:19px;background:#d4d4d4;"></div>
<div style="left:985px;top:247px;width:1px;height:19px;background:#d4d4d4;"></div>
<div style="left:1049px;top:247px;width:1px;height:19px;background:#d4d4d4;"></div>
<div style="left:1113px;top:247px;width:1px;height:19px;background:#d4d4d4;"></div>
<div style="left:1177px;top:247px;width:1px;height:19px;background:#d4d4d4;"></div>
<div style="left:1241px;top:247px;width:1px;height:19px;background:#d4d4d4;"></div>
<div style="left:1305px;top:247px;width:1px;height:19px;background:#d4d4d4;"></div>
<div style="left:89px;top:267px;width:1px;height:19px;background:#d4d4d4;"></div>
<div style="left:153px;top:267px;width:1px;height:19px;background:#d4d4d4;"></div>
<div style="left:217px;top:267px;width:1px;height:19px;background:#d4d4d4;"></div>
<div style="left:281px;top:267px;width:1px;height:19px;background:#d4d4d4;"></div>
<div style="left:345px;top:267px;width:1px;height:19px;background:#d4d4d4;"></div>
<div style="left:409px;top:267px;width:1px;height:19px;background:#d4d4d4;"></div>
<div style="left:473px;top:267px;width:1px;height:19px;background:#d4d4d4;"></div>
<div style="left:537px;top:267px;width:1px;height:19px;background:#d4d4d4;"></div>
<div style="left:601px;top:267px;width:1px;height:19px;background:#d4d4d4;"></div>
<div style="left:793px;top:267px;width:1px;height:19px;background:#d4d4d4;"></div>
<div style="left:857px;top:267px;width:1px;height:19px;background:#d4d4d4;"></div>
<div style="left:921px;top:267px;width:1px;height:19px;background:#d4d4d4;"></div>
<div style="left:985px;top:267px;width:1px;height:19px;background:#d4d4d4;"></div>
<div style="left:1049px;top:267px;width:1px;height:19px;background:#d4d4d4;"></div>
<div style="left:1113px;top:267px;width:1px;height:19px;background:#d4d4d4;"></div>
<div style="left:1177px;top:267px;width:1px;height:19px;background:#d4d4d4;"></div>
<div style="left:1241px;top:267px;width:1px;height:19px;background:#d4d4d4;"></div>
<div style="left:1305px;top:267px;width:1px;height:19px;background:#d4d4d4;"></div>
<div style="left:89px;top:287px;width:1px;height:19px;background:#d4d4d4;"></div>
<div style="left:153px;top:287px;width:1px;height:19px;background:#d4d4d4;"></div>
<div style="left:217px;top:287px;width:1px;height:19px;background:#d4d4d4;"></div>
<div style="left:281px;top:287px;width:1px;height:19px;background:#d4d4d4;"></div>
<div style="left:345px;top:287px;width:1px;height:19px;background:#d4d4d4;"></div>
<div style="left:409px;top:287px;width:1px;height:19px;background:#d4d4d4;"></div>
<div style="left:473px;top:287px;width:1px;height:19px;background:#d4d4d4;"></div>
<div style="left:537px;top:287px;width:1px;height:19px;background:#d4d4d4;"></div>
<div style="left:601px;top:287px;width:1px;height:19px;background:#d4d4d4;"></div>
<div style="left:793px;top:287px;width:1px;height:19px;background:#d4d4d4;"></div>
<div style="left:857px;top:287px;width:1px;height:19px;background:#d4d4d4;"></div>
<div style="left:921px;top:287px;width:1px;height:19px;background:#d4d4d4;"></div>
<div style="left:985px;top:287px;width:1px;height:19px;background:#d4d4d4;"></div>
<div style="left:1049px;top:287px;width:1px;height:19px;background:#d4d4d4;"></div>
<div style="left:1113px;top:287px;width:1px;height:19px;background:#d4d4d4;"></div>
<div style="left:1177px;top:287px;width:1px;height:19px;background:#d4d4d4;"></div>
<div style="left:1241px;top:287px;width:1px;height:19px;background:#d4d4d4;"></div>
<div style="left:1305px;top:287px;width:1px;height:19px;background:#d4d4d4;"></div>
<div style="left:89px;top:307px;width:1px;height:19px;background:#d4d4d4;"></div>
<div style="left:153px;top:307px;width:1px;height:19px;background:#d4d4d4;"></div>
<div style="left:217px;top:307px;width:1px;height:19px;background:#d4d4d4;"></div>
<div style="left:281px;top:307px;width:1px;height:19px;background:#d4d4d4;"></div>
<div style="left:345px;top:307px;width:1px;height:19px;background:#d4d4d4;"></div>
<div style="left:409px;top:307px;width:1px;height:19px;background:#d4d4d4;"></div>
<div style="left:473px;top:307px;width:1px;height:19px;background:#d4d4d4;"></div>
<div style="left:537px;top:307px;width:1px;height:19px;background:#d4d4d4;"></div>
<div style="left:601px;top:307px;width:1px;height:19px;background:#d4d4d4;"></div>
<div style="left:793px;top:307px;width:1px;height:19px;background:#d4d4d4;"></div>
<div style="left:857px;top:307px;width:1px;height:19px;background:#d4d4d4;"></div>
<div style="left:921px;top:307px;width:1px;height:19px;background:#d4d4d4;"></div>
<div style="left:985px;top:307px;width:1px;height:19px;background:#d4d4d4;"></div>
<div style="left:1049px;top:307px;width:1px;height:19px;background:#d4d4d4;"></div>
<div style="left:1113px;top:307px;width:1px;height:19px;background:#d4d4d4;"></div>
<div style="left:1177px;top:307px;width:1px;height:19px;background:#d4d4d4;"></div>
<div style="left:1241px;top:307px;width:1px;height:19px;background:#d4d4d4;"></div>
<div style="left:1305px;top:307px;width:1px;height:19px;background:#d4d4d4;"></div>
<div style="left:89px;top:327px;width:1px;height:19px;background:#d4d4d4;"></div>
<div style="left:153px;top:327px;width:1px;height:19px;background:#d4d4d4;"></div>
<div style="left:217px;top:327px;width:1px;height:19px;background:#d4d4d4;"></div>
<div style="left:281px;top:327px;width:1px;height:19px;background:#d4d4d4;"></div>
<div style="left:345px;top:327px;width:1px;height:19px;background:#d4d4d4;"></div>
<div style="left:409px;top:327px;width:1px;height:19px;background:#d4d4d4;"></div>
<div style="left:473px;top:327px;width:1px;height:19px;background:#d4d4d4;"></div>
<div style="left:537px;top:327px;width:1px;height:19px;background:#d4d4d4;"></div>
<div style="left:601px;top:327px;width:1px;height:19px;background:#d4d4d4;"></div>
<div style="left:793px;top:327px;width:1px;height:19px;background:#d4d4d4;"></div>
<div style="left:857px;top:327px;width:1px;height:19px;background:#d4d4d4;"></div>
<div style="left:921px;top:327px;width:1px;height:19px;background:#d4d4d4;"></div>
<div style="left:985px;top:327px;width:1px;height:19px;background:#d4d4d4;"></div>
<div style="left:1049px;top:327px;width:1px;height:19px;background:#d4d4d4;"></div>
<div style="left:1113px;top:327px;width:1px;height:19px;background:#d4d4d4;"></div>
<div style="left:1177px;top:327px;width:1px;height:19px;background:#d4d4d4;"></div>
<div style="left:1241px;top:327px;width:1px;height:19px;background:#d4d4d4;"></div>
<div style="left:1305px;top:327px;width:1px;height:19px;background:#d4d4d4;"></div>
<div style="left:89px;top:347px;width:1px;height:19px;background:#d4d4d4;"></div>
<div style="left:153px;top:347px;width:1px;height:19px;background:#d4d4d4;"></div>
<div style="left:217px;top:347px;width:1px;height:19px;background:#d4d4d4;"></div>
<div style="left:281px;top:347px;width:1px;height:19px;background:#d4d4d4;"></div>
<div style="left:345px;top:347px;width:1px;height:19px;background:#d4d4d4;"></div>
<div style="left:409px;top:347px;width:1px;height:19px;background:#d4d4d4;"></div>
<div style="left:473px;top:347px;width:1px;height:19px;background:#d4d4d4;"></div>
<div style="left:537px;top:347px;width:1px;height:19px;background:#d4d4d4;"></div>
<div style="left:601px;top:347px;width:1px;height:19px;background:#d4d4d4;"></div>
<div style="left:857px;top:347px;width:1px;height:19px;background:#d4d4d4;"></div>
<div style="left:921px;top:347px;width:1px;height:19px;background:#d4d4d4;"></div>
<div style="left:985px;top:347px;width:1px;height:19px;background:#d4d4d4;"></div>
<div style="left:1049px;top:347px;width:1px;height:19px;background:#d4d4d4;"></div>
<div style="left:1113px;top:347px;width:1px;height:19px;background:#d4d4d4;"></div>
<div style="left:1177px;top:347px;width:1px;height:19px;background:#d4d4d4;"></div>
<div style="left:1241px;top:347px;width:1px;height:19px;background:#d4d4d4;"></div>
<div style="left:1305px;top:347px;width:1px;height:19px;background:#d4d4d4;"></div>
<div style="left:89px;top:367px;width:1px;height:19px;background:#d4d4d4;"></div>
<div style="left:153px;top:367px;width:1px;height:19px;background:#d4d4d4;"></div>
<div style="left:217px;top:367px;width:1px;height:19px;background:#d4d4d4;"></div>
<div style="left:281px;top:367px;width:1px;height:19px;background:#d4d4d4;"></div>
<div style="left:345px;top:367px;width:1px;height:19px;background:#d4d4d4;"></div>
<div style="left:409px;top:367px;width:1px;height:19px;background:#d4d4d4;"></div>
<div style="left:473px;top:367px;width:1px;height:19px;background:#d4d4d4;"></div>
<div style="left:537px;top:367px;width:1px;height:19px;background:#d4d4d4;"></div>
<div style="left:601px;top:367px;width:1px;height:19px;background:#d4d4d4;"></div>
<div style="left:857px;top:367px;width:1px;height:19px;background:#d4d4d4;"></div>
<div style="left:921px;top:367px;width:1px;height:19px;background:#d4d4d4;"></div>
<div style="left:985px;top:367px;width:1px;height:19px;background:#d4d4d4;"></div>
<div style="left:1049px;top:367px;width:1px;height:19px;background:#d4d4d4;"></div>
<div style="left:1113px;top:367px;width:1px;height:19px;background:#d4d4d4;"></div>
<div style="left:1177px;top:367px;width:1px;height:19px;background:#d4d4d4;"></div>
<div style="left:1241px;top:367px;width:1px;height:19px;background:#d4d4d4;"></div>
<div style="left:1305px;top:367px;width:1px;height:19px;background:#d4d4d4;"></div>
<div style="left:89px;top:387px;width:1px;height:19px;background:#d4d4d4;"></div>
<div style="left:153px;top:387px;width:1px;height:19px;background:#d4d4d4;"></div>
<div style="left:217px;top:387px;width:1px;height:19px;background:#d4d4d4;"></div>
<div style="left:281px;top:387px;width:1px;height:19px;background:#d4d4d4;"></div>
<div style="left:345px;top:387px;width:1px;height:19px;background:#d4d4d4;"></div>
<div style="left:409px;top:387px;width:1px;height:19px;background:#d4d4d4;"></div>
<div style="left:473px;top:387px;width:1px;height:19px;background:#d4d4d4;"></div>
<div style="left:537px;top:387px;width:1px;height:19px;background:#d4d4d4;"></div>
<div style="left:601px;top:387px;width:1px;height:19px;background:#d4d4d4;"></div>
<div style="left:857px;top:387px;width:1px;height:19px;background:#d4d4d4;"></div>
<div style="left:921px;top:387px;width:1px;height:19px;background:#d4d4d4;"></div>
<div style="left:985px;top:387px;width:1px;height:19px;background:#d4d4d4;"></div>
<div style="left:1049px;top:387px;width:1px;height:19px;background:#d4d4d4;"></div>
<div style="left:1113px;top:387px;width:1px;height:19px;background:#d4d4d4;"></div>
<div style="left:1177px;top:387px;width:1px;height:19px;background:#d4d4d4;"></div>
<div style="left:1241px;top:387px;width:1px;height:19px;background:#d4d4d4;"></div>
<div style="left:1305px;top:387px;width:1px;height:19px;background:#d4d4d4;"></div>
<div style="left:89px;top:407px;width:1px;height:19px;background:#d4d4d4;"></div>
<div style="left:153px;top:407px;width:1px;height:19px;background:#d4d4d4;"></div>
<div style="left:217px;top:407px;width:1px;height:19px;background:#d4d4d4;"></div>
<div style="left:281px;top:407px;width:1px;height:19px;background:#d4d4d4;"></div>
<div style="left:345px;top:407px;width:1px;height:19px;background:#d4d4d4;"></div>
<div style="left:409px;top:407px;width:1px;height:19px;background:#d4d4d4;"></div>
<div style="left:473px;top:407px;width:1px;height:19px;background:#d4d4d4;"></div>
<div style="left:537px;top:407px;width:1px;height:19px;background:#d4d4d4;"></div>
<div style="left:601px;top:407px;width:1px;height:19px;background:#d4d4d4;"></div>
<div style="left:857px;top:407px;width:1px;height:19px;background:#d4d4d4;"></div>
<div style="left:921px;top:407px;width:1px;height:19px;background:#d4d4d4;"></div>
<div style="left:985px;top:407px;width:1px;height:19px;background:#d4d4d4;"></div>
<div style="left:1049px;top:407px;width:1px;height:19px;background:#d4d4d4;"></div>
<div style="left:1113px;top:407px;width:1px;height:19px;background:#d4d4d4;"></div>
<div style="left:1177px;top:407px;width:1px;height:19px;background:#d4d4d4;"></div>
<div style="left:1241px;top:407px;width:1px;height:19px;background:#d4d4d4;"></div>
<div style="left:1305px;top:407px;width:1px;height:19px;background:#d4d4d4;"></div>
<div style="left:89px;top:427px;width:1px;height:19px;background:#d4d4d4;"></div>
<div style="left:153px;top:427px;width:1px;height:19px;background:#d4d4d4;"></div>
<div style="left:217px;top:427px;width:1px;height:19px;background:#d4d4d4;"></div>
<div style="left:281px;top:427px;width:1px;height:19px;background:#d4d4d4;"></div>
<div style="left:345px;top:427px;width:1px;height:19px;background:#d4d4d4;"></div>
<div style="left:409px;top:427px;width:1px;height:19px;background:#d4d4d4;"></div>
<div style="left:473px;top:427px;width:1px;height:19px;background:#d4d4d4;"></div>
<div style="left:537px;top:427px;width:1px;height:19px;background:#d4d4d4;"></div>
<div style="left:601px;top:427px;width:1px;height:19px;background:#d4d4d4;"></div>
<div style="left:921px;top:427px;width:1px;height:19px;background:#d4d4d4;"></div>
<div style="left:985px;top:427px;width:1px;height:19px;background:#d4d4d4;"></div>
<div style="left:1049px;top:427px;width:1px;height:19px;background:#d4d4d4;"></div>
<div style="left:1113px;top:427px;width:1px;height:19px;background:#d4d4d4;"></div>
<div style="left:1177px;top:427px;width:1px;height:19px;background:#d4d4d4;"></div>
<div style="left:1241px;top:427px;width:1px;height:19px;background:#d4d4d4;"></div>
<div style="left:1305px;top:427px;width:1px;height:19px;background:#d4d4d4;"></div>
<div style="left:89px;top:447px;width:1px;height:19px;background:#d4d4d4;"></div>
<div style="left:153px;top:447px;width:1px;height:19px;background:#d4d4d4;"></div>
<div style="left:217px;top:447px;width:1px;height:19px;background:#d4d4d4;"></div>
<div style="left:281px;top:447px;width:1px;height:19px;background:#d4d4d4;"></div>
<div style="left:345px;top:447px;width:1px;height:19px;background:#d4d4d4;"></div>
<div style="left:409px;top:447px;width:1px;height:19px;background:#d4d4d4;"></div>
<div style="left:473px;top:447px;width:1px;height:19px;background:#d4d4d4;"></div>
<div style="left:537px;top:447px;width:1px;height:19px;background:#d4d4d4;"></div>
<div style="left:601px;top:447px;width:1px;height:19px;background:#d4d4d4;"></div>
<div style="left:921px;top:447px;width:1px;height:19px;background:#d4d4d4;"></div>
<div style="left:985px;top:447px;width:1px;height:19px;background:#d4d4d4;"></div>
<div style="left:1049px;top:447px;width:1px;height:19px;background:#d4d4d4;"></div>
<div style="left:1113px;top:447px;width:1px;height:19px;background:#d4d4d4;"></div>
<div style="left:1177px;top:447px;width:1px;height:19px;background:#d4d4d4;"></div>
<div style="left:1241px;top:447px;width:1px;height:19px;background:#d4d4d4;"></div>
<div style="left:1305px;top:447px;width:1px;height:19px;background:#d4d4d4;"></div>
<div style="left:89px;top:467px;width:1px;height:19px;background:#d4d4d4;"></div>
<div style="left:153px;top:467px;width:1px;height:19px;background:#d4d4d4;"></div>
<div style="left:217px;top:467px;width:1px;height:19px;background:#d4d4d4;"></div>
<div style="left:281px;top:467px;width:1px;height:19px;background:#d4d4d4;"></div>
<div style="left:345px;top:467px;width:1px;height:19px;background:#d4d4d4;"></div>
<div style="left:409px;top:467px;width:1px;height:19px;background:#d4d4d4;"></div>
<div style="left:473px;top:467px;width:1px;height:19px;background:#d4d4d4;"></div>
<div style="left:537px;top:467px;width:1px;height:19px;background:#d4d4d4;"></div>
<div style="left:601px;top:467px;width:1px;height:19px;background:#d4d4d4;"></div>
<div style="left:921px;top:467px;width:1px;height:19px;background:#d4d4d4;"></div>
<div style="left:985px;top:467px;width:1px;height:19px;background:#d4d4d4;"></div>
<div style="left:1049px;top:467px;width:1px;height:19px;background:#d4d4d4;"></div>
<div style="left:1113px;top:467px;width:1px;height:19px;background:#d4d4d4;"></div>
<div style="left:1177px;top:467px;width:1px;height:19px;background:#d4d4d4;"></div>
<div style="left:1241px;top:467px;width:1px;height:19px;background:#d4d4d4;"></div>
<div style="left:1305px;top:467px;width:1px;height:19px;background:#d4d4d4;"></div>
<div style="left:89px;top:487px;width:1px;height:19px;background:#d4d4d4;"></div>
<div style="left:153px;top:487px;width:1px;height:19px;background:#d4d4d4;"></div>
<div style="left:217px;top:487px;width:1px;height:19px;background:#d4d4d4;"></div>
<div style="left:281px;top:487px;width:1px;height:19px;background:#d4d4d4;"></div>
<div style="left:345px;top:487px;width:1px;height:19px;background:#d4d4d4;"></div>
<div style="left:409px;top:487px;width:1px;height:19px;background:#d4d4d4;"></div>
<div style="left:473px;top:487px;width:1px;height:19px;background:#d4d4d4;"></div>
<div style="left:537px;top:487px;width:1px;height:19px;background:#d4d4d4;"></div>
<div style="left:601px;top:487px;width:1px;height:19px;background:#d4d4d4;"></div>
<div style="left:793px;top:487px;width:1px;height:19px;background:#d4d4d4;"></div>
<div style="left:857px;top:487px;width:1px;height:19px;background:#d4d4d4;"></div>
<div style="left:921px;top:487px;width:1px;height:19px;background:#d4d4d4;"></div>
<div style="left:985px;top:487px;width:1px;height:19px;background:#d4d4d4;"></div>
<div style="left:1049px;top:487px;width:1px;height:19px;background:#d4d4d4;"></div>
<div style="left:1113px;top:487px;width:1px;height:19px;background:#d4d4d4;"></div>
<div style="left:1177px;top:487px;width:1px;height:19px;background:#d4d4d4;"></div>
<div style="left:1241px;top:487px;width:1px;height:19px;background:#d4d4d4;"></div>
<div style="left:1305px;top:487px;width:1px;height:19px;background:#d4d4d4;"></div>
<div style="left:89px;top:507px;width:1px;height:19px;background:#d4d4d4;"></div>
<div style="left:153px;top:507px;width:1px;height:19px;background:#d4d4d4;"></div>
<div style="left:217px;top:507px;width:1px;height:19px;background:#d4d4d4;"></div>
<div style="left:281px;top:507px;width:1px;height:19px;background:#d4d4d4;"></div>
<div style="left:345px;top:507px;width:1px;height:19px;background:#d4d4d4;"></div>
<div style="left:409px;top:507px;width:1px;height:19px;background:#d4d4d4;"></div>
<div style="left:473px;top:507px;width:1px;height:19px;background:#d4d4d4;"></div>
<div style="left:537px;top:507px;width:1px;height:19px;background:#d4d4d4;"></div>
<div style="left:601px;top:507px;width:1px;height:19px;background:#d4d4d4;"></div>
<div style="left:793px;top:507px;width:1px;height:19px;background:#d4d4d4;"></div>
<div style="left:857px;top:507px;width:1px;height:19px;background:#d4d4d4;"></div>
<div style="left:921px;top:507px;width:1px;height:19px;background:#d4d4d4;"></div>
<div style="left:985px;top:507px;width:1px;height:19px;background:#d4d4d4;"></div>
<div style="left:1049px;top:507px;width:1px;height:19px;background:#d4d4d4;"></div>
<div style="left:1113px;top:507px;width:1px;height:19px;background:#d4d4d4;"></div>
<div style="left:1177px;top:507px;width:1px;height:19px;background:#d4d4d4;"></div>
<div style="left:1241px;top:507px;width:1px;height:19px;background:#d4d4d4;"></div>
<div style="left:1305px;top:507px;width:1px;height:19px;background:#d4d4d4;"></div>
<div style="left:89px;top:527px;width:1px;height:19px;background:#d4d4d4;"></div>
<div style="left:153px;top:527px;width:1px;height:19px;background:#d4d4d4;"></div>
<div style="left:217px;top:527px;width:1px;height:19px;background:#d4d4d4;"></div>
<div style="left:281px;top:527px;width:1px;height:19px;background:#d4d4d4;"></div>
<div style="left:345px;top:527px;width:1px;height:19px;background:#d4d4d4;"></div>
<div style="left:409px;top:527px;width:1px;height:19px;background:#d4d4d4;"></div>
<div style="left:473px;top:527px;width:1px;height:19px;background:#d4d4d4;"></div>
<div style="left:537px;top:527px;width:1px;height:19px;background:#d4d4d4;"></div>
<div style="left:601px;top:527px;width:1px;height:19px;background:#d4d4d4;"></div>
<div style="left:793px;top:527px;width:1px;height:19px;background:#d4d4d4;"></div>
<div style="left:857px;top:527px;width:1px;height:19px;background:#d4d4d4;"></div>
<div style="left:921px;top:527px;width:1px;height:19px;background:#d4d4d4;"></div>
<div style="left:985px;top:527px;width:1px;height:19px;background:#d4d4d4;"></div>
<div style="left:1049px;top:527px;width:1px;height:19px;background:#d4d4d4;"></div>
<div style="left:1113px;top:527px;width:1px;height:19px;background:#d4d4d4;"></div>
<div style="left:1177px;top:527px;width:1px;height:19px;background:#d4d4d4;"></div>
<div style="left:1241px;top:527px;width:1px;height:19px;background:#d4d4d4;"></div>
<div style="left:1305px;top:527px;width:1px;height:19px;background:#d4d4d4;"></div>
<div style="left:89px;top:547px;width:1px;height:19px;background:#d4d4d4;"></div>
<div style="left:153px;top:547px;width:1px;height:19px;background:#d4d4d4;"></div>
<div style="left:217px;top:547px;width:1px;height:19px;background:#d4d4d4;"></div>
<div style="left:281px;top:547px;width:1px;height:19px;background:#d4d4d4;"></div>
<div style="left:345px;top:547px;width:1px;height:19px;background:#d4d4d4;"></div>
<div style="left:409px;top:547px;width:1px;height:19px;background:#d4d4d4;"></div>
<div style="left:473px;top:547px;width:1px;height:19px;background:#d4d4d4;"></div>
<div style="left:537px;top:547px;width:1px;height:19px;background:#d4d4d4;"></div>
<div style="left:601px;top:547px;width:1px;height:19px;background:#d4d4d4;"></div>
<div style="left:793px;top:547px;width:1px;height:19px;background:#d4d4d4;"></div>
<div style="left:857px;top:547px;width:1px;height:19px;background:#d4d4d4;"></div>
<div style="left:921px;top:547px;width:1px;height:19px;background:#d4d4d4;"></div>
<div style="left:985px;top:547px;width:1px;height:19px;background:#d4d4d4;"></div>
<div style="left:1049px;top:547px;width:1px;height:19px;background:#d4d4d4;"></div>
<div style="left:1113px;top:547px;width:1px;height:19px;background:#d4d4d4;"></div>
<div style="left:1177px;top:547px;width:1px;height:19px;background:#d4d4d4;"></div>
<div style="left:1241px;top:547px;width:1px;height:19px;background:#d4d4d4;"></div>
<div style="left:1305px;top:547px;width:1px;height:19px;background:#d4d4d4;"></div>
<div style="left:89px;top:567px;width:1px;height:19px;background:#d4d4d4;"></div>
<div style="left:153px;top:567px;width:1px;height:19px;background:#d4d4d4;"></div>
<div style="left:217px;top:567px;width:1px;height:19px;background:#d4d4d4;"></div>
<div style="left:281px;top:567px;width:1px;height:19px;background:#d4d4d4;"></div>
<div style="left:345px;top:567px;width:1px;height:19px;background:#d4d4d4;"></div>
<div style="left:409px;top:567px;width:1px;height:19px;background:#d4d4d4;"></div>
<div style="left:473px;top:567px;width:1px;height:19px;background:#d4d4d4;"></div>
<div style="left:537px;top:567px;width:1px;height:19px;background:#d4d4d4;"></div>
<div style="left:601px;top:567px;width:1px;height:19px;background:#d4d4d4;"></div>
<div style="left:729px;top:567px;width:1px;height:19px;background:#d4d4d4;"></div>
<div style="left:793px;top:567px;width:1px;height:19px;background:#d4d4d4;"></div>
<div style="left:857px;top:567px;width:1px;height:19px;background:#d4d4d4;"></div>
<div style="left:921px;top:567px;width:1px;height:19px;background:#d4d4d4;"></div>
<div style="left:985px;top:567px;width:1px;height:19px;background:#d4d4d4;"></div>
<div style="left:1049px;top:567px;width:1px;height:19px;background:#d4d4d4;"></div>
<div style="left:1113px;top:567px;width:1px;height:19px;background:#d4d4d4;"></div>
<div style="left:1177px;top:567px;width:1px;height:19px;background:#d4d4d4;"></div>
<div style="left:1241px;top:567px;width:1px;height:19px;background:#d4d4d4;"></div>
<div style="left:1305px;top:567px;width:1px;height:19px;background:#d4d4d4;"></div>
<div style="left:89px;top:587px;width:1px;height:19px;background:#d4d4d4;"></div>
<div style="left:153px;top:587px;width:1px;height:19px;background:#d4d4d4;"></div>
<div style="left:217px;top:587px;width:1px;height:19px;background:#d4d4d4;"></div>
<div style="left:281px;top:587px;width:1px;height:19px;background:#d4d4d4;"></div>
<div style="left:345px;top:587px;width:1px;height:19px;background:#d4d4d4;"></div>
<div style="left:409px;top:587px;width:1px;height:19px;background:#d4d4d4;"></div>
<div style="left:473px;top:587px;width:1px;height:19px;background:#d4d4d4;"></div>
<div style="left:537px;top:587px;width:1px;height:19px;background:#d4d4d4;"></div>
<div style="left:601px;top:587px;width:1px;height:19px;background:#d4d4d4;"></div>
<div style="left:729px;top:587px;width:1px;height:19px;background:#d4d4d4;"></div>
<div style="left:793px;top:587px;width:1px;height:19px;background:#d4d4d4;"></div>
<div style="left:857px;top:587px;width:1px;height:19px;background:#d4d4d4;"></div>
<div style="left:921px;top:587px;width:1px;height:19px;background:#d4d4d4;"></div>
<div style="left:985px;top:587px;width:1px;height:19px;background:#d4d4d4;"></div>
<div style="left:1049px;top:587px;width:1px;height:19px;background:#d4d4d4;"></div>
<div style="left:1113px;top:587px;width:1px;height:19px;background:#d4d4d4;"></div>
<div style="left:1177px;top:587px;width:1px;height:19px;background:#d4d4d4;"></div>
<div style="left:1241px;top:587px;width:1px;height:19px;background:#d4d4d4;"></div>
<div style="left:1305px;top:587px;width:1px;height:19px;background:#d4d4d4;"></div>
<div style="left:89px;top:607px;width:1px;height:19px;background:#d4d4d4;"></div>
<div style="left:153px;top:607px;width:1px;height:19px;background:#d4d4d4;"></div>
<div style="left:217px;top:607px;width:1px;height:19px;background:#d4d4d4;"></div>
<div style="left:281px;top:607px;width:1px;height:19px;background:#d4d4d4;"></div>
<div style="left:345px;top:607px;width:1px;height:19px;background:#d4d4d4;"></div>
<div style="left:409px;top:607px;width:1px;height:19px;background:#d4d4d4;"></div>
<div style="left:473px;top:607px;width:1px;height:19px;background:#d4d4d4;"></div>
<div style="left:537px;top:607px;width:1px;height:19px;background:#d4d4d4;"></div>
<div style="left:601px;top:607px;width:1px;height:19px;background:#d4d4d4;"></div>
<div style="left:729px;top:607px;width:1px;height:19px;background:#d4d4d4;"></div>
<div style="left:793px;top:607px;width:1px;height:19px;background:#d4d4d4;"></div>
<div style="left:857px;top:607px;width:1px;height:19px;background:#d4d4d4;"></div>
<div style="left:921px;top:607px;width:1px;height:19px;background:#d4d4d4;"></div>
<div style="left:985px;top:607px;width:1px;height:19px;background:#d4d4d4;"></div>
<div style="left:1049px;top:607px;width:1px;height:19px;background:#d4d4d4;"></div>
<div style="left:1113px;top:607px;width:1px;height:19px;background:#d4d4d4;"></div>
<div style="left:1177px;top:607px;width:1px;height:19px;background:#d4d4d4;"></div>
<div style="left:1241px;top:607px;width:1px;height:19px;background:#d4d4d4;"></div>
<div style="left:1305px;top:607px;width:1px;height:19px;background:#d4d4d4;"></div>
<div style="left:89px;top:627px;width:1px;height:19px;background:#d4d4d4;"></div>
<div style="left:153px;top:627px;width:1px;height:19px;background:#d4d4d4;"></div>
<div style="left:217px;top:627px;width:1px;height:19px;background:#d4d4d4;"></div>
<div style="left:281px;top:627px;width:1px;height:19px;background:#d4d4d4;"></div>
<div style="left:345px;top:627px;width:1px;height:19px;background:#d4d4d4;"></div>
<div style="left:409px;top:627px;width:1px;height:19px;background:#d4d4d4;"></div>
<div style="left:473px;top:627px;width:1px;height:19px;background:#d4d4d4;"></div>
<div style="left:537px;top:627px;width:1px;height:19px;background:#d4d4d4;"></div>
<div style="left:601px;top:627px;width:1px;height:19px;background:#d4d4d4;"></div>
<div style="left:729px;top:627px;width:1px;height:19px;background:#d4d4d4;"></div>
<div style="left:793px;top:627px;width:1px;height:19px;background:#d4d4d4;"></div>
<div style="left:857px;top:627px;width:1px;height:19px;background:#d4d4d4;"></div>
<div style="left:921px;top:627px;width:1px;height:19px;background:#d4d4d4;"></div>
<div style="left:985px;top:627px;width:1px;height:19px;background:#d4d4d4;"></div>
<div style="left:1049px;top:627px;width:1px;height:19px;background:#d4d4d4;"></div>
<div style="left:1113px;top:627px;width:1px;height:19px;background:#d4d4d4;"></div>
<div style="left:1177px;top:627px;width:1px;height:19px;background:#d4d4d4;"></div>
<div style="left:1241px;top:627px;width:1px;height:19px;background:#d4d4d4;"></div>
<div style="left:1305px;top:627px;width:1px;height:19px;background:#d4d4d4;"></div>
<div style="left:89px;top:647px;width:1px;height:19px;background:#d4d4d4;"></div>
<div style="left:153px;top:647px;width:1px;height:19px;background:#d4d4d4;"></div>
<div style="left:217px;top:647px;width:1px;height:19px;background:#d4d4d4;"></div>
<div style="left:281px;top:647px;width:1px;height:19px;background:#d4d4d4;"></div>
<div style="left:345px;top:647px;width:1px;height:19px;background:#d4d4d4;"></div>
<div style="left:409px;top:647px;width:1px;height:19px;background:#d4d4d4;"></div>
<div style="left:473px;top:647px;width:1px;height:19px;background:#d4d4d4;"></div>
<div style="left:537px;top:647px;width:1px;height:19px;background:#d4d4d4;"></div>
<div style="left:601px;top:647px;width:1px;height:19px;background:#d4d4d4;"></div>
<div style="left:793px;top:647px;width:1px;height:19px;background:#d4d4d4;"></div>
<div style="left:857px;top:647px;width:1px;height:19px;background:#d4d4d4;"></div>
<div style="left:921px;top:647px;width:1px;height:19px;background:#d4d4d4;"></div>
<div style="left:985px;top:647px;width:1px;height:19px;background:#d4d4d4;"></div>
<div style="left:1049px;top:647px;width:1px;height:19px;background:#d4d4d4;"></div>
<div style="left:1113px;top:647px;width:1px;height:19px;background:#d4d4d4;"></div>
<div style="left:1177px;top:647px;width:1px;height:19px;background:#d4d4d4;"></div>
<div style="left:1241px;top:647px;width:1px;height:19px;background:#d4d4d4;"></div>
<div style="left:1305px;top:647px;width:1px;height:19px;background:#d4d4d4;"></div>
<div style="left:89px;top:667px;width:1px;height:11px;background:#d4d4d4;"></div>
<div style="left:153px;top:667px;width:1px;height:11px;background:#d4d4d4;"></div>
<div style="left:217px;top:667px;width:1px;height:11px;background:#d4d4d4;"></div>
<div style="left:281px;top:667px;width:1px;height:11px;background:#d4d4d4;"></div>
<div style="left:345px;top:667px;width:1px;height:11px;background:#d4d4d4;"></div>
<div style="left:409px;top:667px;width:1px;height:11px;background:#d4d4d4;"></div>
<div style="left:473px;top:667px;width:1px;height:11px;background:#d4d4d4;"></div>
<div style="left:537px;top:667px;width:1px;height:11px;background:#d4d4d4;"></div>
<div style="left:601px;top:667px;width:1px;height:11px;background:#d4d4d4;"></div>
<div style="left:793px;top:667px;width:1px;height:11px;background:#d4d4d4;"></div>
<div style="left:857px;top:667px;width:1px;height:11px;background:#d4d4d4;"></div>
<div style="left:921px;top:667px;width:1px;height:11px;background:#d4d4d4;"></div>
<div style="left:985px;top:667px;width:1px;height:11px;background:#d4d4d4;"></div>
<div style="left:1049px;top:667px;width:1px;height:11px;background:#d4d4d4;"></div>
<div style="left:1113px;top:667px;width:1px;height:11px;background:#d4d4d4;"></div>
<div style="left:1177px;top:667px;width:1px;height:11px;background:#d4d4d4;"></div>
<div style="left:1241px;top:667px;width:1px;height:11px;background:#d4d4d4;"></div>
<div style="left:1305px;top:667px;width:1px;height:11px;background:#d4d4d4;"></div>
<div style="left:26px;top:266px;width:1318px;height:1px;background:#d4d4d4;"></div>
<div style="left:26px;top:286px;width:1318px;height:1px;background:#d4d4d4;"></div>
<div style="left:26px;top:306px;width:1318px;height:1px;background:#d4d4d4;"></div>
<div style="left:26px;top:326px;width:1318px;height:1px;background:#d4d4d4;"></div>
<div style="left:26px;top:346px;width:1318px;height:1px;background:#d4d4d4;"></div>
<div style="left:26px;top:366px;width:1318px;height:1px;background:#d4d4d4;"></div>
<div style="left:26px;top:386px;width:1318px;height:1px;background:#d4d4d4;"></div>
<div style="left:26px;top:406px;width:1318px;height:1px;background:#d4d4d4;"></div>
<div style="left:26px;top:426px;width:1318px;height:1px;background:#d4d4d4;"></div>
<div style="left:26px;top:446px;width:1318px;height:1px;background:#d4d4d4;"></div>
<div style="left:26px;top:466px;width:1318px;height:1px;background:#d4d4d4;"></div>
<div style="left:26px;top:486px;width:1318px;height:1px;background:#d4d4d4;"></div>
<div style="left:26px;top:506px;width:1318px;height:1px;background:#d4d4d4;"></div>
<div style="left:26px;top:526px;width:1318px;height:1px;background:#d4d4d4;"></div>
<div style="left:26px;top:546px;width:1318px;height:1px;background:#d4d4d4;"></div>
<div style="left:26px;top:566px;width:1318px;height:1px;background:#d4d4d4;"></div>
<div style="left:26px;top:586px;width:1318px;height:1px;background:#d4d4d4;"></div>
<div style="left:26px;top:606px;width:1318px;height:1px;background:#d4d4d4;"></div>
<div style="left:26px;top:626px;width:1318px;height:1px;background:#d4d4d4;"></div>
<div style="left:26px;top:646px;width:1318px;height:1px;background:#d4d4d4;"></div>
<div style="left:26px;top:666px;width:1318px;height:1px;background:#d4d4d4;"></div>
<div style="left:25px;top:246px;width:1320px;height:1px;background:#ababab;"></div>
<div style="left:25px;top:227px;width:1px;height:451px;background:#ababab;"></div>
<div style="left:1344px;top:246px;width:1px;height:432px;background:#9f9f9f;"></div>
<div style="left:0px;top:678px;width:1345px;height:1px;background:#bdbdbd;"></div>
<div style="left:26px;top:227px;width:63px;height:19px;background:#d2d2d2;"></div>
<div style="left:602px;top:227px;width:63px;height:19px;background:#9fd5b7;"></div>
<div style="left:0px;top:247px;width:25px;height:19px;background:#d2d2d2;"></div>
<div style="left:89px;top:227px;width:1px;height:19px;background:#c8c8c8;"></div>
<div style="left:153px;top:227px;width:1px;height:19px;background:#c8c8c8;"></div>
<div style="left:217px;top:227px;width:1px;height:19px;background:#c8c8c8;"></div>
<div style="left:281px;top:227px;width:1px;height:19px;background:#c8c8c8;"></div>
<div style="left:345px;top:227px;width:1px;height:19px;background:#c8c8c8;"></div>
<div style="left:409px;top:227px;width:1px;height:19px;background:#c8c8c8;"></div>
<div style="left:473px;top:227px;width:1px;height:19px;background:#c8c8c8;"></div>
<div style="left:537px;top:227px;width:1px;height:19px;background:#c8c8c8;"></div>
<div style="left:601px;top:227px;width:1px;height:19px;background:#c8c8c8;"></div>
<div style="left:665px;top:227px;width:1px;height:19px;background:#c8c8c8;"></div>
<div style="left:729px;top:227px;width:1px;height:19px;background:#c8c8c8;"></div>
<div style="left:793px;top:227px;width:1px;height:19px;background:#c8c8c8;"></div>
<div style="left:857px;top:227px;width:1px;height:19px;background:#c8c8c8;"></div>
<div style="left:921px;top:227px;width:1px;height:19px;background:#c8c8c8;"></div>
<div style="left:985px;top:227px;width:1px;height:19px;background:#c8c8c8;"></div>
<div style="left:1049px;top:227px;width:1px;height:19px;background:#c8c8c8;"></div>
<div style="left:1113px;top:227px;width:1px;height:19px;background:#c8c8c8;"></div>
<div style="left:1177px;top:227px;width:1px;height:19px;background:#c8c8c8;"></div>
<div style="left:1241px;top:227px;width:1px;height:19px;background:#c8c8c8;"></div>
<div style="left:1305px;top:227px;width:1px;height:19px;background:#c8c8c8;"></div>
<div style="left:0px;top:266px;width:25px;height:1px;background:#c8c8c8;"></div>
<div style="left:0px;top:286px;width:25px;height:1px;background:#c8c8c8;"></div>
<div style="left:0px;top:306px;width:25px;height:1px;background:#c8c8c8;"></div>
<div style="left:0px;top:326px;width:25px;height:1px;background:#c8c8c8;"></div>
<div style="left:0px;top:346px;width:25px;height:1px;background:#c8c8c8;"></div>
<div style="left:0px;top:366px;width:25px;height:1px;background:#c8c8c8;"></div>
<div style="left:0px;top:386px;width:25px;height:1px;background:#c8c8c8;"></div>
<div style="left:0px;top:406px;width:25px;height:1px;background:#c8c8c8;"></div>
<div style="left:0px;top:426px;width:25px;height:1px;background:#c8c8c8;"></div>
<div style="left:0px;top:446px;width:25px;height:1px;background:#c8c8c8;"></div>
<div style="left:0px;top:466px;width:25px;height:1px;background:#c8c8c8;"></div>
<div style="left:0px;top:486px;width:25px;height:1px;background:#c8c8c8;"></div>
<div style="left:0px;top:506px;width:25px;height:1px;background:#c8c8c8;"></div>
<div style="left:0px;top:526px;width:25px;height:1px;background:#c8c8c8;"></div>
<div style="left:0px;top:546px;width:25px;height:1px;background:#c8c8c8;"></div>
<div style="left:0px;top:566px;width:25px;height:1px;background:#c8c8c8;"></div>
<div style="left:0px;top:586px;width:25px;height:1px;background:#c8c8c8;"></div>
<div style="left:0px;top:606px;width:25px;height:1px;background:#c8c8c8;"></div>
<div style="left:0px;top:626px;width:25px;height:1px;background:#c8c8c8;"></div>
<div style="left:0px;top:646px;width:25px;height:1px;background:#c8c8c8;"></div>
<div style="left:0px;top:666px;width:25px;height:1px;background:#c8c8c8;"></div>
<svg style="position:absolute;left:10px;top:231px;" width="13" height="13" viewBox="0 0 13 13"><path d="M12 0.5 L12 12 L0.5 12 Z" fill="#b4b4b4"/></svg>
<span class="t" style="left:53.28px;top:230.20px;font-size:13.5px;color:#217346;transform:scaleX(0.9374);">A</span>
<span class="t" style="left:116.81px;top:230.20px;font-size:13.5px;color:#333;transform:scaleX(0.9374);">B</span>
<span class="t" style="left:180.81px;top:230.20px;font-size:13.5px;color:#333;transform:scaleX(0.9374);">C</span>
<span class="t" style="left:244.34px;top:230.20px;font-size:13.5px;color:#333;transform:scaleX(0.9374);">D</span>
<span class="t" style="left:308.81px;top:230.20px;font-size:13.5px;color:#333;transform:scaleX(0.9374);">E</span>
<span class="t" style="left:373.28px;top:230.20px;font-size:13.5px;color:#333;transform:scaleX(0.9374);">F</span>
<span class="t" style="left:436.81px;top:230.20px;font-size:13.5px;color:#333;transform:scaleX(0.9374);">G</span>
<span class="t" style="left:500.81px;top:230.20px;font-size:13.5px;color:#333;transform:scaleX(0.9374);">H</span>
<span class="t" style="left:567.63px;top:230.20px;font-size:13.5px;color:#333;transform:scaleX(0.9374);">I</span>
<span class="t" style="left:630.69px;top:230.20px;font-size:13.5px;color:#333;transform:scaleX(0.9374);">J</span>
<span class="t" style="left:692.81px;top:230.20px;font-size:13.5px;color:#333;transform:scaleX(0.9374);">K</span>
<span class="t" style="left:757.28px;top:230.20px;font-size:13.5px;color:#333;transform:scaleX(0.9374);">L</span>
<span class="t" style="left:819.88px;top:230.20px;font-size:13.5px;color:#333;transform:scaleX(0.9374);">M</span>
<span class="t" style="left:884.81px;top:230.20px;font-size:13.5px;color:#333;transform:scaleX(0.9374);">N</span>
<span class="t" style="left:948.81px;top:230.20px;font-size:13.5px;color:#333;transform:scaleX(0.9374);">O</span>
<span class="t" style="left:1012.81px;top:230.20px;font-size:13.5px;color:#333;transform:scaleX(0.9374);">P</span>
<span class="t" style="left:1076.81px;top:230.20px;font-size:13.5px;color:#333;transform:scaleX(0.9374);">Q</span>
<span class="t" style="left:1140.34px;top:230.20px;font-size:13.5px;color:#333;transform:scaleX(0.9374);">R</span>
<span class="t" style="left:1205.28px;top:230.20px;font-size:13.5px;color:#333;transform:scaleX(0.9374);">S</span>
<span class="t" style="left:1269.75px;top:230.20px;font-size:13.5px;color:#333;transform:scaleX(0.9374);">T</span>
<span class="t" style="left:1332.81px;top:230.20px;font-size:13.5px;color:#333;transform:scaleX(0.9374);">U</span>
<div style="left:0px;top:247px;width:25px;height:431px;overflow:hidden"><span class="t" style="left:9.45px;top:4.00px;font-size:13.5px;color:#217346;transform:scaleX(0.9374);">1</span></div>
<div style="left:0px;top:267px;width:25px;height:411px;overflow:hidden"><span class="t" style="left:9.92px;top:4.00px;font-size:13.5px;color:#333;transform:scaleX(0.9374);">2</span></div>
<div style="left:0px;top:287px;width:25px;height:391px;overflow:hidden"><span class="t" style="left:9.92px;top:4.00px;font-size:13.5px;color:#333;transform:scaleX(0.9374);">3</span></div>
<div style="left:0px;top:307px;width:25px;height:371px;overflow:hidden"><span class="t" style="left:9.45px;top:4.00px;font-size:13.5px;color:#333;transform:scaleX(0.9374);">4</span></div>
<div style="left:0px;top:327px;width:25px;height:351px;overflow:hidden"><span class="t" style="left:9.92px;top:4.00px;font-size:13.5px;color:#333;transform:scaleX(0.9374);">5</span></div>
<div style="left:0px;top:347px;width:25px;height:331px;overflow:hidden"><span class="t" style="left:9.92px;top:4.00px;font-size:13.5px;color:#333;transform:scaleX(0.9374);">6</span></div>
<div style="left:0px;top:367px;width:25px;height:311px;overflow:hidden"><span class="t" style="left:9.92px;top:4.00px;font-size:13.5px;color:#333;transform:scaleX(0.9374);">7</span></div>
<div style="left:0px;top:387px;width:25px;height:291px;overflow:hidden"><span class="t" style="left:9.92px;top:4.00px;font-size:13.5px;color:#333;transform:scaleX(0.9374);">8</span></div>
<div style="left:0px;top:407px;width:25px;height:271px;overflow:hidden"><span class="t" style="left:9.92px;top:4.00px;font-size:13.5px;color:#333;transform:scaleX(0.9374);">9</span></div>
<div style="left:0px;top:427px;width:25px;height:251px;overflow:hidden"><span class="t" style="left:5.93px;top:4.00px;font-size:13.5px;color:#333;transform:scaleX(0.9374);">10</span></div>
<div style="left:0px;top:447px;width:25px;height:231px;overflow:hidden"><span class="t" style="left:6.40px;top:4.00px;font-size:13.5px;color:#333;transform:scaleX(0.9374);">11</span></div>
<div style="left:0px;top:467px;width:25px;height:211px;overflow:hidden"><span class="t" style="left:5.93px;top:4.00px;font-size:13.5px;color:#333;transform:scaleX(0.9374);">12</span></div>
<div style="left:0px;top:487px;width:25px;height:191px;overflow:hidden"><span class="t" style="left:5.93px;top:4.00px;font-size:13.5px;color:#333;transform:scaleX(0.9374);">13</span></div>
<div style="left:0px;top:507px;width:25px;height:171px;overflow:hidden"><span class="t" style="left:5.46px;top:4.00px;font-size:13.5px;color:#333;transform:scaleX(0.9374);">14</span></div>
<div style="left:0px;top:527px;width:25px;height:151px;overflow:hidden"><span class="t" style="left:5.93px;top:4.00px;font-size:13.5px;color:#333;transform:scaleX(0.9374);">15</span></div>
<div style="left:0px;top:547px;width:25px;height:131px;overflow:hidden"><span class="t" style="left:5.93px;top:4.00px;font-size:13.5px;color:#333;transform:scaleX(0.9374);">16</span></div>
<div style="left:0px;top:567px;width:25px;height:111px;overflow:hidden"><span class="t" style="left:5.93px;top:4.00px;font-size:13.5px;color:#333;transform:scaleX(0.9374);">17</span></div>
<div style="left:0px;top:587px;width:25px;height:91px;overflow:hidden"><span class="t" style="left:5.93px;top:4.00px;font-size:13.5px;color:#333;transform:scaleX(0.9374);">18</span></div>
<div style="left:0px;top:607px;width:25px;height:71px;overflow:hidden"><span class="t" style="left:5.93px;top:4.00px;font-size:13.5px;color:#333;transform:scaleX(0.9374);">19</span></div>
<div style="left:0px;top:627px;width:25px;height:51px;overflow:hidden"><span class="t" style="left:6.40px;top:4.00px;font-size:13.5px;color:#333;transform:scaleX(0.9374);">20</span></div>
<div style="left:0px;top:647px;width:25px;height:31px;overflow:hidden"><span class="t" style="left:6.40px;top:4.00px;font-size:13.5px;color:#333;transform:scaleX(0.9374);">21</span></div>
<div style="left:0px;top:667px;width:25px;height:11px;overflow:hidden"><span class="t" style="left:6.40px;top:4.00px;font-size:13.5px;color:#333;transform:scaleX(0.9374);">22</span></div>
<div style="left:26px;top:247px;width:63px;height:19px;overflow:hidden"><span class="t" style="left:1.52px;top:4.00px;font-size:13.5px;color:#000;transform:scaleX(0.9835);">Hospital Id</span></div>
<div style="left:90px;top:247px;width:63px;height:19px;overflow:hidden"><span class="t" style="left:1.51px;top:4.00px;font-size:13.5px;color:#000;transform:scaleX(0.9864);">Hospital Name</span></div>
<span class="t" style="left:156.60px;top:251.00px;font-size:13.5px;color:#000;transform:scaleX(0.9569);">Age</span>
<span class="t" style="left:219.59px;top:251.00px;font-size:13.5px;color:#000;transform:scaleX(1.0145);">Date</span>
<div style="left:282px;top:247px;width:63px;height:19px;overflow:hidden"><span class="t" style="left:2.50px;top:4.00px;font-size:13.5px;color:#000;transform:scaleX(0.9867);">Vaccine Type</span></div>
<div style="left:346px;top:247px;width:63px;height:19px;overflow:hidden"><span class="t" style="left:2.60px;top:4.00px;font-size:13.5px;color:#000;transform:scaleX(1.0494);">Available</span></div>
<div style="left:410px;top:247px;width:63px;height:19px;overflow:hidden"><span class="t" style="left:1.52px;top:4.00px;font-size:13.5px;color:#000;transform:scaleX(0.9844);">Dose1 Available</span></div>
<div style="left:474px;top:247px;width:63px;height:19px;overflow:hidden"><span class="t" style="left:1.52px;top:4.00px;font-size:13.5px;color:#000;transform:scaleX(0.9844);">Dose2 Available</span></div>
<div style="left:538px;top:247px;width:63px;height:19px;overflow:hidden"><span class="t" style="left:1.50px;top:4.00px;font-size:13.5px;color:#000;transform:scaleX(0.9950);">Fee Type</span></div>
<span class="t" style="left:606.68px;top:251.00px;font-size:13.5px;color:#000;transform:scaleX(1.0195);">Location</span>
<div style="left:26px;top:267px;width:63px;height:19px;overflow:hidden"><span class="t" style="left:19.40px;top:4.00px;font-size:13.5px;color:#000;transform:scaleX(0.9160);">666966</span></div>
<div style="left:90px;top:267px;width:63px;height:19px;overflow:hidden"><span class="t" style="left:1.55px;top:4.00px;font-size:13.5px;color:#000;transform:scaleX(0.9517);">LNJP Hospital</span></div>
<div style="left:154px;top:267px;width:63px;height:19px;overflow:hidden"><span class="t" style="left:46.91px;top:4.00px;font-size:13.5px;color:#000;transform:scaleX(0.9160);">45</span></div>
<div style="left:218px;top:267px;width:63px;height:19px;overflow:hidden"><span class="t" style="left:4.50px;top:4.00px;font-size:13.5px;color:#000;font-weight:700;transform:scaleX(0.8154);">#########</span></div>
<div style="left:282px;top:267px;width:63px;height:19px;overflow:hidden"><span class="t" style="left:2.50px;top:4.00px;font-size:13.5px;color:#000;transform:scaleX(0.9009);">COVISHIELD</span></div>
<div style="left:346px;top:267px;width:63px;height:19px;overflow:hidden"><span class="t" style="left:46.91px;top:4.00px;font-size:13.5px;color:#000;transform:scaleX(0.9160);">99</span></div>
<div style="left:410px;top:267px;width:63px;height:19px;overflow:hidden"><span class="t" style="left:46.91px;top:4.00px;font-size:13.5px;color:#000;transform:scaleX(0.9160);">49</span></div>
<div style="left:474px;top:267px;width:63px;height:19px;overflow:hidden"><span class="t" style="left:46.91px;top:4.00px;font-size:13.5px;color:#000;transform:scaleX(0.9160);">50</span></div>
<div style="left:538px;top:267px;width:63px;height:19px;overflow:hidden"><span class="t" style="left:1.46px;top:4.00px;font-size:13.5px;color:#000;transform:scaleX(1.0362);">Free</span></div>
<div style="left:602px;top:267px;width:742px;height:19px;overflow:hidden"><span class="t" style="left:5.70px;top:4.00px;font-size:13.5px;color:#000;transform:scaleX(0.9957);">JLNMarg New Delhi-</span></div>
<div style="left:26px;top:287px;width:63px;height:19px;overflow:hidden"><span class="t" style="left:19.40px;top:4.00px;font-size:13.5px;color:#000;transform:scaleX(0.9160);">666966</span></div>
<div style="left:90px;top:287px;width:63px;height:19px;overflow:hidden"><span class="t" style="left:1.55px;top:4.00px;font-size:13.5px;color:#000;transform:scaleX(0.9517);">LNJP Hospital</span></div>
<div style="left:154px;top:287px;width:63px;height:19px;overflow:hidden"><span class="t" style="left:46.91px;top:4.00px;font-size:13.5px;color:#000;transform:scaleX(0.9160);">45</span></div>
<div style="left:218px;top:287px;width:63px;height:19px;overflow:hidden"><span class="t" style="left:4.50px;top:4.00px;font-size:13.5px;color:#000;font-weight:700;transform:scaleX(0.8154);">#########</span></div>
<div style="left:282px;top:287px;width:63px;height:19px;overflow:hidden"><span class="t" style="left:2.50px;top:4.00px;font-size:13.5px;color:#000;transform:scaleX(0.9009);">COVISHIELD</span></div>
<div style="left:346px;top:287px;width:63px;height:19px;overflow:hidden"><span class="t" style="left:46.91px;top:4.00px;font-size:13.5px;color:#000;transform:scaleX(0.9160);">99</span></div>
<div style="left:410px;top:287px;width:63px;height:19px;overflow:hidden"><span class="t" style="left:46.91px;top:4.00px;font-size:13.5px;color:#000;transform:scaleX(0.9160);">49</span></div>
<div style="left:474px;top:287px;width:63px;height:19px;overflow:hidden"><span class="t" style="left:46.91px;top:4.00px;font-size:13.5px;color:#000;transform:scaleX(0.9160);">50</span></div>
<div style="left:538px;top:287px;width:63px;height:19px;overflow:hidden"><span class="t" style="left:1.46px;top:4.00px;font-size:13.5px;color:#000;transform:scaleX(1.0362);">Free</span></div>
<div style="left:602px;top:287px;width:742px;height:19px;overflow:hidden"><span class="t" style="left:5.70px;top:4.00px;font-size:13.5px;color:#000;transform:scaleX(0.9957);">JLNMarg New Delhi-</span></div>
<div style="left:26px;top:307px;width:63px;height:19px;overflow:hidden"><span class="t" style="left:19.40px;top:4.00px;font-size:13.5px;color:#000;transform:scaleX(0.9160);">666966</span></div>
<div style="left:90px;top:307px;width:63px;height:19px;overflow:hidden"><span class="t" style="left:1.55px;top:4.00px;font-size:13.5px;color:#000;transform:scaleX(0.9517);">LNJP Hospital</span></div>
<div style="left:154px;top:307px;width:63px;height:19px;overflow:hidden"><span class="t" style="left:46.91px;top:4.00px;font-size:13.5px;color:#000;transform:scaleX(0.9160);">45</span></div>
<div style="left:218px;top:307px;width:63px;height:19px;overflow:hidden"><span class="t" style="left:4.50px;top:4.00px;font-size:13.5px;color:#000;font-weight:700;transform:scaleX(0.8154);">#########</span></div>
<div style="left:282px;top:307px;width:63px;height:19px;overflow:hidden"><span class="t" style="left:2.50px;top:4.00px;font-size:13.5px;color:#000;transform:scaleX(0.9009);">COVISHIELD</span></div>
<div style="left:346px;top:307px;width:63px;height:19px;overflow:hidden"><span class="t" style="left:46.91px;top:4.00px;font-size:13.5px;color:#000;transform:scaleX(0.9160);">99</span></div>
<div style="left:410px;top:307px;width:63px;height:19px;overflow:hidden"><span class="t" style="left:46.91px;top:4.00px;font-size:13.5px;color:#000;transform:scaleX(0.9160);">49</span></div>
<div style="left:474px;top:307px;width:63px;height:19px;overflow:hidden"><span class="t" style="left:46.91px;top:4.00px;font-size:13.5px;color:#000;transform:scaleX(0.9160);">50</span></div>
<div style="left:538px;top:307px;width:63px;height:19px;overflow:hidden"><span class="t" style="left:1.46px;top:4.00px;font-size:13.5px;color:#000;transform:scaleX(1.0362);">Free</span></div>
<div style="left:602px;top:307px;width:742px;height:19px;overflow:hidden"><span class="t" style="left:5.70px;top:4.00px;font-size:13.5px;color:#000;transform:scaleX(0.9957);">JLNMarg New Delhi-</span></div>
<div style="left:26px;top:327px;width:63px;height:19px;overflow:hidden"><span class="t" style="left:19.40px;top:4.00px;font-size:13.5px;color:#000;transform:scaleX(0.9160);">666966</span></div>
<div style="left:90px;top:327px;width:63px;height:19px;overflow:hidden"><span class="t" style="left:1.55px;top:4.00px;font-size:13.5px;color:#000;transform:scaleX(0.9517);">LNJP Hospital</span></div>
<div style="left:154px;top:327px;width:63px;height:19px;overflow:hidden"><span class="t" style="left:46.91px;top:4.00px;font-size:13.5px;color:#000;transform:scaleX(0.9160);">45</span></div>
<div style="left:218px;top:327px;width:63px;height:19px;overflow:hidden"><span class="t" style="left:4.50px;top:4.00px;font-size:13.5px;color:#000;font-weight:700;transform:scaleX(0.8154);">#########</span></div>
<div style="left:282px;top:327px;width:63px;height:19px;overflow:hidden"><span class="t" style="left:2.50px;top:4.00px;font-size:13.5px;color:#000;transform:scaleX(0.9009);">COVISHIELD</span></div>
<div style="left:346px;top:327px;width:63px;height:19px;overflow:hidden"><span class="t" style="left:40.03px;top:4.00px;font-size:13.5px;color:#000;transform:scaleX(0.9160);">100</span></div>
<div style="left:410px;top:327px;width:63px;height:19px;overflow:hidden"><span class="t" style="left:46.91px;top:4.00px;font-size:13.5px;color:#000;transform:scaleX(0.9160);">50</span></div>
<div style="left:474px;top:327px;width:63px;height:19px;overflow:hidden"><span class="t" style="left:46.91px;top:4.00px;font-size:13.5px;color:#000;transform:scaleX(0.9160);">50</span></div>
<div style="left:538px;top:327px;width:63px;height:19px;overflow:hidden"><span class="t" style="left:1.46px;top:4.00px;font-size:13.5px;color:#000;transform:scaleX(1.0362);">Free</span></div>
<div style="left:602px;top:327px;width:742px;height:19px;overflow:hidden"><span class="t" style="left:5.70px;top:4.00px;font-size:13.5px;color:#000;transform:scaleX(0.9957);">JLNMarg New Delhi-</span></div>
<div style="left:26px;top:347px;width:63px;height:19px;overflow:hidden"><span class="t" style="left:19.40px;top:4.00px;font-size:13.5px;color:#000;transform:scaleX(0.9160);">560735</span></div>
<div style="left:90px;top:347px;width:63px;height:19px;overflow:hidden"><span class="t" style="left:1.51px;top:4.00px;font-size:13.5px;color:#000;transform:scaleX(0.9874);">Burari Hospital</span></div>
<div style="left:154px;top:347px;width:63px;height:19px;overflow:hidden"><span class="t" style="left:46.91px;top:4.00px;font-size:13.5px;color:#000;transform:scaleX(0.9160);">45</span></div>
<div style="left:218px;top:347px;width:63px;height:19px;overflow:hidden"><span class="t" style="left:4.50px;top:4.00px;font-size:13.5px;color:#000;font-weight:700;transform:scaleX(0.8154);">#########</span></div>
<div style="left:282px;top:347px;width:63px;height:19px;overflow:hidden"><span class="t" style="left:2.50px;top:4.00px;font-size:13.5px;color:#000;transform:scaleX(0.9009);">COVISHIELD</span></div>
<div style="left:346px;top:347px;width:63px;height:19px;overflow:hidden"><span class="t" style="left:46.91px;top:4.00px;font-size:13.5px;color:#000;transform:scaleX(0.9160);">91</span></div>
<div style="left:410px;top:347px;width:63px;height:19px;overflow:hidden"><span class="t" style="left:46.91px;top:4.00px;font-size:13.5px;color:#000;transform:scaleX(0.9160);">41</span></div>
<div style="left:474px;top:347px;width:63px;height:19px;overflow:hidden"><span class="t" style="left:46.91px;top:4.00px;font-size:13.5px;color:#000;transform:scaleX(0.9160);">50</span></div>
<div style="left:538px;top:347px;width:63px;height:19px;overflow:hidden"><span class="t" style="left:1.46px;top:4.00px;font-size:13.5px;color:#000;transform:scaleX(1.0362);">Free</span></div>
<div style="left:602px;top:347px;width:742px;height:19px;overflow:hidden"><span class="t" style="left:4.71px;top:4.00px;font-size:13.5px;color:#000;transform:scaleX(0.9862);">Kaushik Enclave Shankarpura Burari</span></div>
<div style="left:26px;top:367px;width:63px;height:19px;overflow:hidden"><span class="t" style="left:19.40px;top:4.00px;font-size:13.5px;color:#000;transform:scaleX(0.9160);">560735</span></div>
<div style="left:90px;top:367px;width:63px;height:19px;overflow:hidden"><span class="t" style="left:1.51px;top:4.00px;font-size:13.5px;color:#000;transform:scaleX(0.9874);">Burari Hospital</span></div>
<div style="left:154px;top:367px;width:63px;height:19px;overflow:hidden"><span class="t" style="left:46.91px;top:4.00px;font-size:13.5px;color:#000;transform:scaleX(0.9160);">45</span></div>
<div style="left:218px;top:367px;width:63px;height:19px;overflow:hidden"><span class="t" style="left:4.50px;top:4.00px;font-size:13.5px;color:#000;font-weight:700;transform:scaleX(0.8154);">#########</span></div>
<div style="left:282px;top:367px;width:63px;height:19px;overflow:hidden"><span class="t" style="left:2.50px;top:4.00px;font-size:13.5px;color:#000;transform:scaleX(0.9009);">COVISHIELD</span></div>
<div style="left:346px;top:367px;width:63px;height:19px;overflow:hidden"><span class="t" style="left:46.91px;top:4.00px;font-size:13.5px;color:#000;transform:scaleX(0.9160);">80</span></div>
<div style="left:410px;top:367px;width:63px;height:19px;overflow:hidden"><span class="t" style="left:46.91px;top:4.00px;font-size:13.5px;color:#000;transform:scaleX(0.9160);">32</span></div>
<div style="left:474px;top:367px;width:63px;height:19px;overflow:hidden"><span class="t" style="left:46.91px;top:4.00px;font-size:13.5px;color:#000;transform:scaleX(0.9160);">48</span></div>
<div style="left:538px;top:367px;width:63px;height:19px;overflow:hidden"><span class="t" style="left:1.46px;top:4.00px;font-size:13.5px;color:#000;transform:scaleX(1.0362);">Free</span></div>
<div style="left:602px;top:367px;width:742px;height:19px;overflow:hidden"><span class="t" style="left:4.71px;top:4.00px;font-size:13.5px;color:#000;transform:scaleX(0.9862);">Kaushik Enclave Shankarpura Burari</span></div>
<div style="left:26px;top:387px;width:63px;height:19px;overflow:hidden"><span class="t" style="left:19.40px;top:4.00px;font-size:13.5px;color:#000;transform:scaleX(0.9160);">560735</span></div>
<div style="left:90px;top:387px;width:63px;height:19px;overflow:hidden"><span class="t" style="left:1.51px;top:4.00px;font-size:13.5px;color:#000;transform:scaleX(0.9874);">Burari Hospital</span></div>
<div style="left:154px;top:387px;width:63px;height:19px;overflow:hidden"><span class="t" style="left:46.91px;top:4.00px;font-size:13.5px;color:#000;transform:scaleX(0.9160);">45</span></div>
<div style="left:218px;top:387px;width:63px;height:19px;overflow:hidden"><span class="t" style="left:4.50px;top:4.00px;font-size:13.5px;color:#000;font-weight:700;transform:scaleX(0.8154);">#########</span></div>
<div style="left:282px;top:387px;width:63px;height:19px;overflow:hidden"><span class="t" style="left:2.50px;top:4.00px;font-size:13.5px;color:#000;transform:scaleX(0.9009);">COVISHIELD</span></div>
<div style="left:346px;top:387px;width:63px;height:19px;overflow:hidden"><span class="t" style="left:45.99px;top:4.00px;font-size:13.5px;color:#000;transform:scaleX(0.9160);">94</span></div>
<div style="left:410px;top:387px;width:63px;height:19px;overflow:hidden"><span class="t" style="left:46.91px;top:4.00px;font-size:13.5px;color:#000;transform:scaleX(0.9160);">45</span></div>
<div style="left:474px;top:387px;width:63px;height:19px;overflow:hidden"><span class="t" style="left:46.91px;top:4.00px;font-size:13.5px;color:#000;transform:scaleX(0.9160);">49</span></div>
<div style="left:538px;top:387px;width:63px;height:19px;overflow:hidden"><span class="t" style="left:1.46px;top:4.00px;font-size:13.5px;color:#000;transform:scaleX(1.0362);">Free</span></div>
<div style="left:602px;top:387px;width:742px;height:19px;overflow:hidden"><span class="t" style="left:4.71px;top:4.00px;font-size:13.5px;color:#000;transform:scaleX(0.9862);">Kaushik Enclave Shankarpura Burari</span></div>
<div style="left:26px;top:407px;width:63px;height:19px;overflow:hidden"><span class="t" style="left:19.40px;top:4.00px;font-size:13.5px;color:#000;transform:scaleX(0.9160);">560735</span></div>
<div style="left:90px;top:407px;width:63px;height:19px;overflow:hidden"><span class="t" style="left:1.51px;top:4.00px;font-size:13.5px;color:#000;transform:scaleX(0.9874);">Burari Hospital</span></div>
<div style="left:154px;top:407px;width:63px;height:19px;overflow:hidden"><span class="t" style="left:46.91px;top:4.00px;font-size:13.5px;color:#000;transform:scaleX(0.9160);">45</span></div>
<div style="left:218px;top:407px;width:63px;height:19px;overflow:hidden"><span class="t" style="left:4.50px;top:4.00px;font-size:13.5px;color:#000;font-weight:700;transform:scaleX(0.8154);">#########</span></div>
<div style="left:282px;top:407px;width:63px;height:19px;overflow:hidden"><span class="t" style="left:2.50px;top:4.00px;font-size:13.5px;color:#000;transform:scaleX(0.9009);">COVISHIELD</span></div>
<div style="left:346px;top:407px;width:63px;height:19px;overflow:hidden"><span class="t" style="left:46.91px;top:4.00px;font-size:13.5px;color:#000;transform:scaleX(0.9160);">91</span></div>
<div style="left:410px;top:407px;width:63px;height:19px;overflow:hidden"><span class="t" style="left:46.91px;top:4.00px;font-size:13.5px;color:#000;transform:scaleX(0.9160);">41</span></div>
<div style="left:474px;top:407px;width:63px;height:19px;overflow:hidden"><span class="t" style="left:46.91px;top:4.00px;font-size:13.5px;color:#000;transform:scaleX(0.9160);">50</span></div>
<div style="left:538px;top:407px;width:63px;height:19px;overflow:hidden"><span class="t" style="left:1.46px;top:4.00px;font-size:13.5px;color:#000;transform:scaleX(1.0362);">Free</span></div>
<div style="left:602px;top:407px;width:742px;height:19px;overflow:hidden"><span class="t" style="left:4.71px;top:4.00px;font-size:13.5px;color:#000;transform:scaleX(0.9862);">Kaushik Enclave Shankarpura Burari</span></div>
<div style="left:26px;top:427px;width:63px;height:19px;overflow:hidden"><span class="t" style="left:19.40px;top:4.00px;font-size:13.5px;color:#000;transform:scaleX(0.9160);">560766</span></div>
<div style="left:90px;top:427px;width:63px;height:19px;overflow:hidden"><span class="t" style="left:1.57px;top:4.00px;font-size:13.5px;color:#000;transform:scaleX(0.9331);">Dr B L Kapur</span></div>
<div style="left:154px;top:427px;width:63px;height:19px;overflow:hidden"><span class="t" style="left:46.91px;top:4.00px;font-size:13.5px;color:#000;transform:scaleX(0.9160);">18</span></div>
<div style="left:218px;top:427px;width:63px;height:19px;overflow:hidden"><span class="t" style="left:4.50px;top:4.00px;font-size:13.5px;color:#000;font-weight:700;transform:scaleX(0.8154);">#########</span></div>
<div style="left:282px;top:427px;width:63px;height:19px;overflow:hidden"><span class="t" style="left:2.50px;top:4.00px;font-size:13.5px;color:#000;transform:scaleX(0.9009);">COVISHIELD</span></div>
<div style="left:346px;top:427px;width:63px;height:19px;overflow:hidden"><span class="t" style="left:52.87px;top:4.00px;font-size:13.5px;color:#000;transform:scaleX(0.9160);">4</span></div>
<div style="left:410px;top:427px;width:63px;height:19px;overflow:hidden"><span class="t" style="left:52.87px;top:4.00px;font-size:13.5px;color:#000;transform:scaleX(0.9160);">4</span></div>
<div style="left:474px;top:427px;width:63px;height:19px;overflow:hidden"><span class="t" style="left:53.79px;top:4.00px;font-size:13.5px;color:#000;transform:scaleX(0.9160);">0</span></div>
<div style="left:538px;top:427px;width:63px;height:19px;overflow:hidden"><span class="t" style="left:1.46px;top:4.00px;font-size:13.5px;color:#000;transform:scaleX(1.0362);">Paid</span></div>
<div style="left:602px;top:427px;width:742px;height:19px;overflow:hidden"><span class="t" style="left:4.80px;top:4.00px;font-size:13.5px;color:#000;transform:scaleX(0.9032);">PUSA ROAD RAJINDRA PLACE NEW DELHI 110005</span></div>
<div style="left:26px;top:447px;width:63px;height:19px;overflow:hidden"><span class="t" style="left:19.40px;top:4.00px;font-size:13.5px;color:#000;transform:scaleX(0.9160);">560766</span></div>
<div style="left:90px;top:447px;width:63px;height:19px;overflow:hidden"><span class="t" style="left:1.57px;top:4.00px;font-size:13.5px;color:#000;transform:scaleX(0.9331);">Dr B L Kapur</span></div>
<div style="left:154px;top:447px;width:63px;height:19px;overflow:hidden"><span class="t" style="left:46.91px;top:4.00px;font-size:13.5px;color:#000;transform:scaleX(0.9160);">18</span></div>
<div style="left:218px;top:447px;width:63px;height:19px;overflow:hidden"><span class="t" style="left:4.50px;top:4.00px;font-size:13.5px;color:#000;font-weight:700;transform:scaleX(0.8154);">#########</span></div>
<div style="left:282px;top:447px;width:63px;height:19px;overflow:hidden"><span class="t" style="left:2.50px;top:4.00px;font-size:13.5px;color:#000;transform:scaleX(0.9009);">COVISHIELD</span></div>
<div style="left:346px;top:447px;width:63px;height:19px;overflow:hidden"><span class="t" style="left:40.03px;top:4.00px;font-size:13.5px;color:#000;transform:scaleX(0.9160);">276</span></div>
<div style="left:410px;top:447px;width:63px;height:19px;overflow:hidden"><span class="t" style="left:40.03px;top:4.00px;font-size:13.5px;color:#000;transform:scaleX(0.9160);">228</span></div>
<div style="left:474px;top:447px;width:63px;height:19px;overflow:hidden"><span class="t" style="left:46.91px;top:4.00px;font-size:13.5px;color:#000;transform:scaleX(0.9160);">48</span></div>
<div style="left:538px;top:447px;width:63px;height:19px;overflow:hidden"><span class="t" style="left:1.46px;top:4.00px;font-size:13.5px;color:#000;transform:scaleX(1.0362);">Paid</span></div>
<div style="left:602px;top:447px;width:742px;height:19px;overflow:hidden"><span class="t" style="left:4.80px;top:4.00px;font-size:13.5px;color:#000;transform:scaleX(0.9032);">PUSA ROAD RAJINDRA PLACE NEW DELHI 110005</span></div>
<div style="left:26px;top:467px;width:63px;height:19px;overflow:hidden"><span class="t" style="left:19.40px;top:4.00px;font-size:13.5px;color:#000;transform:scaleX(0.9160);">560766</span></div>
<div style="left:90px;top:467px;width:63px;height:19px;overflow:hidden"><span class="t" style="left:1.57px;top:4.00px;font-size:13.5px;color:#000;transform:scaleX(0.9331);">Dr B L Kapur</span></div>
<div style="left:154px;top:467px;width:63px;height:19px;overflow:hidden"><span class="t" style="left:46.91px;top:4.00px;font-size:13.5px;color:#000;transform:scaleX(0.9160);">18</span></div>
<div style="left:218px;top:467px;width:63px;height:19px;overflow:hidden"><span class="t" style="left:4.50px;top:4.00px;font-size:13.5px;color:#000;font-weight:700;transform:scaleX(0.8154);">#########</span></div>
<div style="left:282px;top:467px;width:63px;height:19px;overflow:hidden"><span class="t" style="left:2.50px;top:4.00px;font-size:13.5px;color:#000;transform:scaleX(0.9009);">COVISHIELD</span></div>
<div style="left:346px;top:467px;width:63px;height:19px;overflow:hidden"><span class="t" style="left:40.03px;top:4.00px;font-size:13.5px;color:#000;transform:scaleX(0.9160);">518</span></div>
<div style="left:410px;top:467px;width:63px;height:19px;overflow:hidden"><span class="t" style="left:40.03px;top:4.00px;font-size:13.5px;color:#000;transform:scaleX(0.9160);">493</span></div>
<div style="left:474px;top:467px;width:63px;height:19px;overflow:hidden"><span class="t" style="left:46.91px;top:4.00px;font-size:13.5px;color:#000;transform:scaleX(0.9160);">25</span></div>
<div style="left:538px;top:467px;width:63px;height:19px;overflow:hidden"><span class="t" style="left:1.46px;top:4.00px;font-size:13.5px;color:#000;transform:scaleX(1.0362);">Paid</span></div>
<div style="left:602px;top:467px;width:742px;height:19px;overflow:hidden"><span class="t" style="left:4.80px;top:4.00px;font-size:13.5px;color:#000;transform:scaleX(0.9032);">PUSA ROAD RAJINDRA PLACE NEW DELHI 110005</span></div>
<div style="left:26px;top:487px;width:63px;height:19px;overflow:hidden"><span class="t" style="left:53.79px;top:4.00px;font-size:13.5px;color:#000;transform:scaleX(0.9160);">3</span></div>
<div style="left:90px;top:487px;width:63px;height:19px;overflow:hidden"><span class="t" style="left:2.50px;top:4.00px;font-size:13.5px;color:#000;transform:scaleX(0.9636);">Aruna Asaf Ali</span></div>
<div style="left:154px;top:487px;width:63px;height:19px;overflow:hidden"><span class="t" style="left:46.91px;top:4.00px;font-size:13.5px;color:#000;transform:scaleX(0.9160);">45</span></div>
<div style="left:218px;top:487px;width:63px;height:19px;overflow:hidden"><span class="t" style="left:4.50px;top:4.00px;font-size:13.5px;color:#000;font-weight:700;transform:scaleX(0.8154);">#########</span></div>
<div style="left:282px;top:487px;width:63px;height:19px;overflow:hidden"><span class="t" style="left:2.50px;top:4.00px;font-size:13.5px;color:#000;transform:scaleX(0.9009);">COVISHIELD</span></div>
<div style="left:346px;top:487px;width:63px;height:19px;overflow:hidden"><span class="t" style="left:46.91px;top:4.00px;font-size:13.5px;color:#000;transform:scaleX(0.9160);">90</span></div>
<div style="left:410px;top:487px;width:63px;height:19px;overflow:hidden"><span class="t" style="left:46.91px;top:4.00px;font-size:13.5px;color:#000;transform:scaleX(0.9160);">41</span></div>
<div style="left:474px;top:487px;width:63px;height:19px;overflow:hidden"><span class="t" style="left:46.91px;top:4.00px;font-size:13.5px;color:#000;transform:scaleX(0.9160);">49</span></div>
<div style="left:538px;top:487px;width:63px;height:19px;overflow:hidden"><span class="t" style="left:1.46px;top:4.00px;font-size:13.5px;color:#000;transform:scaleX(1.0362);">Free</span></div>
<div style="left:602px;top:487px;width:742px;height:19px;overflow:hidden"><span class="t" style="left:5.70px;top:4.00px;font-size:13.5px;color:#000;transform:scaleX(0.9799);">5-Rajpur Road Delhi-110054</span></div>
<div style="left:26px;top:507px;width:63px;height:19px;overflow:hidden"><span class="t" style="left:53.79px;top:4.00px;font-size:13.5px;color:#000;transform:scaleX(0.9160);">3</span></div>
<div style="left:90px;top:507px;width:63px;height:19px;overflow:hidden"><span class="t" style="left:2.50px;top:4.00px;font-size:13.5px;color:#000;transform:scaleX(0.9636);">Aruna Asaf Ali</span></div>
<div style="left:154px;top:507px;width:63px;height:19px;overflow:hidden"><span class="t" style="left:46.91px;top:4.00px;font-size:13.5px;color:#000;transform:scaleX(0.9160);">45</span></div>
<div style="left:218px;top:507px;width:63px;height:19px;overflow:hidden"><span class="t" style="left:4.50px;top:4.00px;font-size:13.5px;color:#000;font-weight:700;transform:scaleX(0.8154);">#########</span></div>
<div style="left:282px;top:507px;width:63px;height:19px;overflow:hidden"><span class="t" style="left:2.50px;top:4.00px;font-size:13.5px;color:#000;transform:scaleX(0.9009);">COVISHIELD</span></div>
<div style="left:346px;top:507px;width:63px;height:19px;overflow:hidden"><span class="t" style="left:46.91px;top:4.00px;font-size:13.5px;color:#000;transform:scaleX(0.9160);">98</span></div>
<div style="left:410px;top:507px;width:63px;height:19px;overflow:hidden"><span class="t" style="left:46.91px;top:4.00px;font-size:13.5px;color:#000;transform:scaleX(0.9160);">48</span></div>
<div style="left:474px;top:507px;width:63px;height:19px;overflow:hidden"><span class="t" style="left:46.91px;top:4.00px;font-size:13.5px;color:#000;transform:scaleX(0.9160);">50</span></div>
<div style="left:538px;top:507px;width:63px;height:19px;overflow:hidden"><span class="t" style="left:1.46px;top:4.00px;font-size:13.5px;color:#000;transform:scaleX(1.0362);">Free</span></div>
<div style="left:602px;top:507px;width:742px;height:19px;overflow:hidden"><span class="t" style="left:5.70px;top:4.00px;font-size:13.5px;color:#000;transform:scaleX(0.9799);">5-Rajpur Road Delhi-110054</span></div>
<div style="left:26px;top:527px;width:63px;height:19px;overflow:hidden"><span class="t" style="left:53.79px;top:4.00px;font-size:13.5px;color:#000;transform:scaleX(0.9160);">3</span></div>
<div style="left:90px;top:527px;width:63px;height:19px;overflow:hidden"><span class="t" style="left:2.50px;top:4.00px;font-size:13.5px;color:#000;transform:scaleX(0.9636);">Aruna Asaf Ali</span></div>
<div style="left:154px;top:527px;width:63px;height:19px;overflow:hidden"><span class="t" style="left:46.91px;top:4.00px;font-size:13.5px;color:#000;transform:scaleX(0.9160);">45</span></div>
<div style="left:218px;top:527px;width:63px;height:19px;overflow:hidden"><span class="t" style="left:4.50px;top:4.00px;font-size:13.5px;color:#000;font-weight:700;transform:scaleX(0.8154);">#########</span></div>
<div style="left:282px;top:527px;width:63px;height:19px;overflow:hidden"><span class="t" style="left:2.50px;top:4.00px;font-size:13.5px;color:#000;transform:scaleX(0.9009);">COVISHIELD</span></div>
<div style="left:346px;top:527px;width:63px;height:19px;overflow:hidden"><span class="t" style="left:46.91px;top:4.00px;font-size:13.5px;color:#000;transform:scaleX(0.9160);">91</span></div>
<div style="left:410px;top:527px;width:63px;height:19px;overflow:hidden"><span class="t" style="left:46.91px;top:4.00px;font-size:13.5px;color:#000;transform:scaleX(0.9160);">48</span></div>
<div style="left:474px;top:527px;width:63px;height:19px;overflow:hidden"><span class="t" style="left:46.91px;top:4.00px;font-size:13.5px;color:#000;transform:scaleX(0.9160);">43</span></div>
<div style="left:538px;top:527px;width:63px;height:19px;overflow:hidden"><span class="t" style="left:1.46px;top:4.00px;font-size:13.5px;color:#000;transform:scaleX(1.0362);">Free</span></div>
<div style="left:602px;top:527px;width:742px;height:19px;overflow:hidden"><span class="t" style="left:5.70px;top:4.00px;font-size:13.5px;color:#000;transform:scaleX(0.9799);">5-Rajpur Road Delhi-110054</span></div>
<div style="left:26px;top:547px;width:63px;height:19px;overflow:hidden"><span class="t" style="left:53.79px;top:4.00px;font-size:13.5px;color:#000;transform:scaleX(0.9160);">3</span></div>
<div style="left:90px;top:547px;width:63px;height:19px;overflow:hidden"><span class="t" style="left:2.50px;top:4.00px;font-size:13.5px;color:#000;transform:scaleX(0.9636);">Aruna Asaf Ali</span></div>
<div style="left:154px;top:547px;width:63px;height:19px;overflow:hidden"><span class="t" style="left:46.91px;top:4.00px;font-size:13.5px;color:#000;transform:scaleX(0.9160);">45</span></div>
<div style="left:218px;top:547px;width:63px;height:19px;overflow:hidden"><span class="t" style="left:4.50px;top:4.00px;font-size:13.5px;color:#000;font-weight:700;transform:scaleX(0.8154);">#########</span></div>
<div style="left:282px;top:547px;width:63px;height:19px;overflow:hidden"><span class="t" style="left:2.50px;top:4.00px;font-size:13.5px;color:#000;transform:scaleX(0.9009);">COVISHIELD</span></div>
<div style="left:346px;top:547px;width:63px;height:19px;overflow:hidden"><span class="t" style="left:46.91px;top:4.00px;font-size:13.5px;color:#000;transform:scaleX(0.9160);">97</span></div>
<div style="left:410px;top:547px;width:63px;height:19px;overflow:hidden"><span class="t" style="left:46.91px;top:4.00px;font-size:13.5px;color:#000;transform:scaleX(0.9160);">49</span></div>
<div style="left:474px;top:547px;width:63px;height:19px;overflow:hidden"><span class="t" style="left:46.91px;top:4.00px;font-size:13.5px;color:#000;transform:scaleX(0.9160);">48</span></div>
<div style="left:538px;top:547px;width:63px;height:19px;overflow:hidden"><span class="t" style="left:1.46px;top:4.00px;font-size:13.5px;color:#000;transform:scaleX(1.0362);">Free</span></div>
<div style="left:602px;top:547px;width:742px;height:19px;overflow:hidden"><span class="t" style="left:5.70px;top:4.00px;font-size:13.5px;color:#000;transform:scaleX(0.9799);">5-Rajpur Road Delhi-110054</span></div>
<div style="left:26px;top:567px;width:63px;height:19px;overflow:hidden"><span class="t" style="left:19.40px;top:4.00px;font-size:13.5px;color:#000;transform:scaleX(0.9160);">723483</span></div>
<div style="left:90px;top:567px;width:63px;height:19px;overflow:hidden"><span class="t" style="left:2.50px;top:4.00px;font-size:13.5px;color:#000;transform:scaleX(0.9369);">GBSSS Rani Bagh</span></div>
<div style="left:154px;top:567px;width:63px;height:19px;overflow:hidden"><span class="t" style="left:46.91px;top:4.00px;font-size:13.5px;color:#000;transform:scaleX(0.9160);">45</span></div>
<div style="left:218px;top:567px;width:63px;height:19px;overflow:hidden"><span class="t" style="left:4.50px;top:4.00px;font-size:13.5px;color:#000;font-weight:700;transform:scaleX(0.8154);">#########</span></div>
<div style="left:282px;top:567px;width:63px;height:19px;overflow:hidden"><span class="t" style="left:2.50px;top:4.00px;font-size:13.5px;color:#000;transform:scaleX(0.9009);">COVISHIELD</span></div>
<div style="left:346px;top:567px;width:63px;height:19px;overflow:hidden"><span class="t" style="left:46.91px;top:4.00px;font-size:13.5px;color:#000;transform:scaleX(0.9160);">45</span></div>
<div style="left:410px;top:567px;width:63px;height:19px;overflow:hidden"><span class="t" style="left:46.91px;top:4.00px;font-size:13.5px;color:#000;transform:scaleX(0.9160);">25</span></div>
<div style="left:474px;top:567px;width:63px;height:19px;overflow:hidden"><span class="t" style="left:46.91px;top:4.00px;font-size:13.5px;color:#000;transform:scaleX(0.9160);">20</span></div>
<div style="left:538px;top:567px;width:63px;height:19px;overflow:hidden"><span class="t" style="left:1.46px;top:4.00px;font-size:13.5px;color:#000;transform:scaleX(1.0362);">Free</span></div>
<div style="left:602px;top:567px;width:742px;height:19px;overflow:hidden"><span class="t" style="left:4.72px;top:4.00px;font-size:13.5px;color:#000;transform:scaleX(0.9788);">Karol Bagh</span></div>
<div style="left:26px;top:587px;width:63px;height:19px;overflow:hidden"><span class="t" style="left:19.40px;top:4.00px;font-size:13.5px;color:#000;transform:scaleX(0.9160);">723483</span></div>
<div style="left:90px;top:587px;width:63px;height:19px;overflow:hidden"><span class="t" style="left:2.50px;top:4.00px;font-size:13.5px;color:#000;transform:scaleX(0.9369);">GBSSS Rani Bagh</span></div>
<div style="left:154px;top:587px;width:63px;height:19px;overflow:hidden"><span class="t" style="left:46.91px;top:4.00px;font-size:13.5px;color:#000;transform:scaleX(0.9160);">45</span></div>
<div style="left:218px;top:587px;width:63px;height:19px;overflow:hidden"><span class="t" style="left:4.50px;top:4.00px;font-size:13.5px;color:#000;font-weight:700;transform:scaleX(0.8154);">#########</span></div>
<div style="left:282px;top:587px;width:63px;height:19px;overflow:hidden"><span class="t" style="left:2.50px;top:4.00px;font-size:13.5px;color:#000;transform:scaleX(0.9009);">COVISHIELD</span></div>
<div style="left:346px;top:587px;width:63px;height:19px;overflow:hidden"><span class="t" style="left:46.91px;top:4.00px;font-size:13.5px;color:#000;transform:scaleX(0.9160);">49</span></div>
<div style="left:410px;top:587px;width:63px;height:19px;overflow:hidden"><span class="t" style="left:46.91px;top:4.00px;font-size:13.5px;color:#000;transform:scaleX(0.9160);">30</span></div>
<div style="left:474px;top:587px;width:63px;height:19px;overflow:hidden"><span class="t" style="left:46.91px;top:4.00px;font-size:13.5px;color:#000;transform:scaleX(0.9160);">19</span></div>
<div style="left:538px;top:587px;width:63px;height:19px;overflow:hidden"><span class="t" style="left:1.46px;top:4.00px;font-size:13.5px;color:#000;transform:scaleX(1.0362);">Free</span></div>
<div style="left:602px;top:587px;width:742px;height:19px;overflow:hidden"><span class="t" style="left:4.72px;top:4.00px;font-size:13.5px;color:#000;transform:scaleX(0.9788);">Karol Bagh</span></div>
<div style="left:26px;top:607px;width:63px;height:19px;overflow:hidden"><span class="t" style="left:19.40px;top:4.00px;font-size:13.5px;color:#000;transform:scaleX(0.9160);">723483</span></div>
<div style="left:90px;top:607px;width:63px;height:19px;overflow:hidden"><span class="t" style="left:2.50px;top:4.00px;font-size:13.5px;color:#000;transform:scaleX(0.9369);">GBSSS Rani Bagh</span></div>
<div style="left:154px;top:607px;width:63px;height:19px;overflow:hidden"><span class="t" style="left:46.91px;top:4.00px;font-size:13.5px;color:#000;transform:scaleX(0.9160);">45</span></div>
<div style="left:218px;top:607px;width:63px;height:19px;overflow:hidden"><span class="t" style="left:4.50px;top:4.00px;font-size:13.5px;color:#000;font-weight:700;transform:scaleX(0.8154);">#########</span></div>
<div style="left:282px;top:607px;width:63px;height:19px;overflow:hidden"><span class="t" style="left:2.50px;top:4.00px;font-size:13.5px;color:#000;transform:scaleX(0.9009);">COVISHIELD</span></div>
<div style="left:346px;top:607px;width:63px;height:19px;overflow:hidden"><span class="t" style="left:46.91px;top:4.00px;font-size:13.5px;color:#000;transform:scaleX(0.9160);">49</span></div>
<div style="left:410px;top:607px;width:63px;height:19px;overflow:hidden"><span class="t" style="left:46.91px;top:4.00px;font-size:13.5px;color:#000;transform:scaleX(0.9160);">29</span></div>
<div style="left:474px;top:607px;width:63px;height:19px;overflow:hidden"><span class="t" style="left:46.91px;top:4.00px;font-size:13.5px;color:#000;transform:scaleX(0.9160);">20</span></div>
<div style="left:538px;top:607px;width:63px;height:19px;overflow:hidden"><span class="t" style="left:1.46px;top:4.00px;font-size:13.5px;color:#000;transform:scaleX(1.0362);">Free</span></div>
<div style="left:602px;top:607px;width:742px;height:19px;overflow:hidden"><span class="t" style="left:4.72px;top:4.00px;font-size:13.5px;color:#000;transform:scaleX(0.9788);">Karol Bagh</span></div>
<div style="left:26px;top:627px;width:63px;height:19px;overflow:hidden"><span class="t" style="left:19.40px;top:4.00px;font-size:13.5px;color:#000;transform:scaleX(0.9160);">723483</span></div>
<div style="left:90px;top:627px;width:63px;height:19px;overflow:hidden"><span class="t" style="left:2.50px;top:4.00px;font-size:13.5px;color:#000;transform:scaleX(0.9369);">GBSSS Rani Bagh</span></div>
<div style="left:154px;top:627px;width:63px;height:19px;overflow:hidden"><span class="t" style="left:46.91px;top:4.00px;font-size:13.5px;color:#000;transform:scaleX(0.9160);">45</span></div>
<div style="left:218px;top:627px;width:63px;height:19px;overflow:hidden"><span class="t" style="left:4.50px;top:4.00px;font-size:13.5px;color:#000;font-weight:700;transform:scaleX(0.8154);">#########</span></div>
<div style="left:282px;top:627px;width:63px;height:19px;overflow:hidden"><span class="t" style="left:2.50px;top:4.00px;font-size:13.5px;color:#000;transform:scaleX(0.9009);">COVISHIELD</span></div>
<div style="left:346px;top:627px;width:63px;height:19px;overflow:hidden"><span class="t" style="left:46.91px;top:4.00px;font-size:13.5px;color:#000;transform:scaleX(0.9160);">49</span></div>
<div style="left:410px;top:627px;width:63px;height:19px;overflow:hidden"><span class="t" style="left:46.91px;top:4.00px;font-size:13.5px;color:#000;transform:scaleX(0.9160);">30</span></div>
<div style="left:474px;top:627px;width:63px;height:19px;overflow:hidden"><span class="t" style="left:46.91px;top:4.00px;font-size:13.5px;color:#000;transform:scaleX(0.9160);">19</span></div>
<div style="left:538px;top:627px;width:63px;height:19px;overflow:hidden"><span class="t" style="left:1.46px;top:4.00px;font-size:13.5px;color:#000;transform:scaleX(1.0362);">Free</span></div>
<div style="left:602px;top:627px;width:742px;height:19px;overflow:hidden"><span class="t" style="left:4.72px;top:4.00px;font-size:13.5px;color:#000;transform:scaleX(0.9788);">Karol Bagh</span></div>
<div style="left:26px;top:647px;width:63px;height:19px;overflow:hidden"><span class="t" style="left:19.40px;top:4.00px;font-size:13.5px;color:#000;transform:scaleX(0.9160);">580638</span></div>
<div style="left:90px;top:647px;width:63px;height:19px;overflow:hidden"><span class="t" style="left:2.50px;top:4.00px;font-size:13.5px;color:#000;transform:scaleX(0.8927);">ARUNA ASAF ALI</span></div>
<div style="left:154px;top:647px;width:63px;height:19px;overflow:hidden"><span class="t" style="left:46.91px;top:4.00px;font-size:13.5px;color:#000;transform:scaleX(0.9160);">45</span></div>
<div style="left:218px;top:647px;width:63px;height:19px;overflow:hidden"><span class="t" style="left:4.50px;top:4.00px;font-size:13.5px;color:#000;font-weight:700;transform:scaleX(0.8154);">#########</span></div>
<div style="left:282px;top:647px;width:63px;height:19px;overflow:hidden"><span class="t" style="left:2.50px;top:4.00px;font-size:13.5px;color:#000;transform:scaleX(0.9009);">COVISHIELD</span></div>
<div style="left:346px;top:647px;width:63px;height:19px;overflow:hidden"><span class="t" style="left:46.91px;top:4.00px;font-size:13.5px;color:#000;transform:scaleX(0.9160);">98</span></div>
<div style="left:410px;top:647px;width:63px;height:19px;overflow:hidden"><span class="t" style="left:46.91px;top:4.00px;font-size:13.5px;color:#000;transform:scaleX(0.9160);">48</span></div>
<div style="left:474px;top:647px;width:63px;height:19px;overflow:hidden"><span class="t" style="left:46.91px;top:4.00px;font-size:13.5px;color:#000;transform:scaleX(0.9160);">50</span></div>
<div style="left:538px;top:647px;width:63px;height:19px;overflow:hidden"><span class="t" style="left:1.46px;top:4.00px;font-size:13.5px;color:#000;transform:scaleX(1.0362);">Free</span></div>
<div style="left:602px;top:647px;width:742px;height:19px;overflow:hidden"><span class="t" style="left:5.70px;top:4.00px;font-size:13.5px;color:#000;transform:scaleX(0.9799);">5-Rajpur Road Delhi-110054</span></div>
<div style="left:26px;top:667px;width:63px;height:11px;overflow:hidden"><span class="t" style="left:19.40px;top:4.00px;font-size:13.5px;color:#000;transform:scaleX(0.9160);">580638</span></div>
<div style="left:90px;top:667px;width:63px;height:11px;overflow:hidden"><span class="t" style="left:2.50px;top:4.00px;font-size:13.5px;color:#000;transform:scaleX(0.8927);">ARUNA ASAF ALI</span></div>
<div style="left:154px;top:667px;width:63px;height:11px;overflow:hidden"><span class="t" style="left:46.91px;top:4.00px;font-size:13.5px;color:#000;transform:scaleX(0.9160);">45</span></div>
<div style="left:218px;top:667px;width:63px;height:11px;overflow:hidden"><span class="t" style="left:4.50px;top:4.00px;font-size:13.5px;color:#000;font-weight:700;transform:scaleX(0.8154);">#########</span></div>
<div style="left:282px;top:667px;width:63px;height:11px;overflow:hidden"><span class="t" style="left:2.50px;top:4.00px;font-size:13.5px;color:#000;transform:scaleX(0.9009);">COVISHIELD</span></div>
<div style="left:346px;top:667px;width:63px;height:11px;overflow:hidden"><span class="t" style="left:46.91px;top:4.00px;font-size:13.5px;color:#000;transform:scaleX(0.9160);">96</span></div>
<div style="left:410px;top:667px;width:63px;height:11px;overflow:hidden"><span class="t" style="left:46.91px;top:4.00px;font-size:13.5px;color:#000;transform:scaleX(0.9160);">46</span></div>
<div style="left:474px;top:667px;width:63px;height:11px;overflow:hidden"><span class="t" style="left:46.91px;top:4.00px;font-size:13.5px;color:#000;transform:scaleX(0.9160);">50</span></div>
<div style="left:538px;top:667px;width:63px;height:11px;overflow:hidden"><span class="t" style="left:1.46px;top:4.00px;font-size:13.5px;color:#000;transform:scaleX(1.0362);">Free</span></div>
<div style="left:602px;top:667px;width:742px;height:11px;overflow:hidden"><span class="t" style="left:5.70px;top:4.00px;font-size:13.5px;color:#000;transform:scaleX(0.9799);">5-Rajpur Road Delhi-110054</span></div>
<div style="left:24px;top:245px;width:67px;height:23px;border:2px solid #217346"></div>
<div style="left:86px;top:263px;width:7px;height:7px;background:#217346;border:1px solid #fff"></div>
<div style="left:5px;top:171px;width:102px;height:26px;background:#fff;border:1px solid #c6c6c6"></div>
<span class="t" style="left:12.00px;top:179.00px;font-size:12.5px;color:#262626;transform:scaleX(1.0432);">A1</span>
<svg style="position:absolute;left:92px;top:180.5px;" width="9" height="6" viewBox="0 0 9 6"><path d="M0.5 0.5 H8.5 L4.5 4.8 Z" fill="#777"/></svg>
<div style="left:121px;top:179px;width:2px;height:2px;background:#b0b0b0;"></div>
<div style="left:121px;top:183px;width:2px;height:2px;background:#b0b0b0;"></div>
<div style="left:121px;top:187px;width:2px;height:2px;background:#b0b0b0;"></div>
<div style="left:137px;top:171px;width:110px;height:26px;background:#fff;border:1px solid #c6c6c6"></div>
<svg style="position:absolute;left:149px;top:178px;" width="12" height="12" viewBox="0 0 12 12"><path d="M1.2 1.2 L10.8 10.8 M10.8 1.2 L1.2 10.8" stroke="#bdbdbd" stroke-width="1.7"/></svg>
<svg style="position:absolute;left:184px;top:177px;" width="16" height="14" viewBox="0 0 16 14"><path d="M1.8 7.2 L5.8 11.5 L14.2 2.2" fill="none" stroke="#c4c4c4" stroke-width="2.3"/></svg>
<svg style="position:absolute;left:220px;top:176px;" width="16" height="16" viewBox="0 0 16 16"><path d="M10.8 3.3 C10 2.2 8 2.2 7.3 4.3 L5.2 12 C4.8 13.6 3.6 13.8 2.6 13.2" fill="none" stroke="#707070" stroke-width="1.4"/><path d="M4.8 5.4 H9.2" stroke="#707070" stroke-width="1.2"/><path d="M7.7 8.3 C9 8 9.6 8.3 10.2 9.5 L10.9 11 C11.3 11.7 12 11.8 13.2 11.6 M13.8 8.2 C12.8 8.2 12.3 8.6 11.8 9.2 L9.6 11.5 C9 12 8.5 12 7.9 11.9" fill="none" stroke="#707070" stroke-width="1.2"/></svg>
<div style="left:250px;top:171px;width:1111px;height:46px;background:#fff;border:1px solid #c6c6c6"></div>
<span class="t" style="left:261.46px;top:177.60px;font-size:13.5px;color:#3a3a3a;transform:scaleX(1.0438);">Hospital Id</span>
<svg style="position:absolute;left:1348px;top:178px;" width="9" height="8" viewBox="0 0 9 8"><path d="M1.6 5.9 L4.6 2.9 L7.6 5.9" fill="none" stroke="#666" stroke-width="1.8"/></svg>
<div style="left:1348px;top:260px;width:15px;height:403px;background:#dadada;"></div>
<div style="left:1348px;top:229px;width:15px;height:15px;background:#fff;border:1px solid #ababab"></div>
<svg style="position:absolute;left:1351px;top:234px;" width="9" height="5" viewBox="0 0 9 5"><path d="M0.5 4.5 L4.5 0.5 L8.5 4.5 Z" fill="#606060"/></svg>
<div style="left:1348px;top:244px;width:15px;height:17px;background:#fff;border:1px solid #ababab"></div>
<div style="left:1348px;top:663px;width:15px;height:15px;background:#fff;border:1px solid #ababab"></div>
<svg style="position:absolute;left:1351px;top:668px;" width="9" height="5" viewBox="0 0 9 5"><path d="M0.5 0.5 L4.5 4.5 L8.5 0.5 Z" fill="#606060"/></svg>
<svg style="position:absolute;left:27px;top:687px;" width="6" height="10" viewBox="0 0 6 10"><path d="M5 0.5 V9.5 L0.5 5 Z" fill="#c4c4c4"/></svg>
<svg style="position:absolute;left:55px;top:687px;" width="6" height="10" viewBox="0 0 6 10"><path d="M0.8 0.5 V9.5 L5.3 5 Z" fill="#c4c4c4"/></svg>
<div style="left:100px;top:678px;width:219px;height:25px;background:#fff;border-left:1px solid #c6c6c6;border-right:1px solid #c6c6c6"></div>
<div style="left:100px;top:701px;width:219px;height:2px;background:#217346;"></div>
<span class="t" style="left:112.70px;top:683.80px;font-size:14px;color:#1e6b40;font-weight:700;transform:scaleX(0.9081);">Cowin_Central Delhi_Availablity</span>
<svg style="position:absolute;left:351px;top:683px;" width="18" height="18" viewBox="0 0 18 18"><circle cx="9" cy="9" r="8" fill="none" stroke="#777" stroke-width="1.3"/><path d="M9 4.5 V13.5 M4.5 9 H13.5" stroke="#777" stroke-width="1.6"/></svg>
<div style="left:819px;top:686px;width:2px;height:2px;background:#b0b0b0;"></div>
<div style="left:819px;top:691px;width:2px;height:2px;background:#b0b0b0;"></div>
<div style="left:819px;top:696px;width:2px;height:2px;background:#b0b0b0;"></div>
<div style="left:837px;top:686px;width:508px;height:14px;background:#dadada;"></div>
<div style="left:836px;top:685px;width:15px;height:15px;background:#fff;border:1px solid #ababab"></div>
<svg style="position:absolute;left:841px;top:688px;" width="6" height="9" viewBox="0 0 6 9"><path d="M5 0.5 V8.5 L0.8 4.5 Z" fill="#606060"/></svg>
<div style="left:850px;top:685px;width:456px;height:15px;background:#fff;border:1px solid #ababab"></div>
<div style="left:1330px;top:685px;width:15px;height:15px;background:#fff;border:1px solid #ababab"></div>
<svg style="position:absolute;left:1335px;top:688px;" width="6" height="9" viewBox="0 0 6 9"><path d="M0.8 0.5 V8.5 L5 4.5 Z" fill="#606060"/></svg>
<div style="left:0px;top:706px;width:1366px;height:1px;background:#d6d6d6;"></div>
<span class="t" style="left:7.50px;top:712.00px;font-size:12px;color:#333;transform:scaleX(0.8937);">Ready</span>
<svg style="position:absolute;left:57px;top:709px;" width="18" height="16" viewBox="0 0 18 16"><rect x="1" y="1" width="14" height="12" fill="none" stroke="#444" stroke-width="1"/><path d="M1 3.5 H15 M3 6 H6 M3 8.5 H6 M3 11 H6" stroke="#444" stroke-width="1"/><circle cx="11.5" cy="10.5" r="3.8" fill="#f3f2f1" stroke="#444" stroke-width="1"/><circle cx="11.5" cy="10.5" r="1.8" fill="#444"/></svg>
<div style="left:1066px;top:706px;width:40px;height:22px;background:#d2d0ce;"></div>
<svg style="position:absolute;left:1078px;top:709px;" width="15" height="15" viewBox="0 0 15 15"><rect x="1.6" y="1.6" width="12" height="12" fill="none" stroke="#444" stroke-width="1.2"/><path d="M5.6 1.6 V13.6 M9.6 1.6 V13.6 M1.6 5.6 H13.6 M1.6 9.6 H13.6" stroke="#444" stroke-width="1.1"/></svg>
<svg style="position:absolute;left:1118px;top:709px;" width="16" height="15" viewBox="0 0 16 15"><rect x="1.6" y="1.6" width="13" height="12" fill="none" stroke="#444" stroke-width="1.2"/><rect x="4.7" y="3.8" width="6.8" height="7.8" fill="none" stroke="#444" stroke-width="1.1"/><path d="M6.3 5.8 H10 M6.3 7.7 H10 M6.3 9.6 H10" stroke="#444" stroke-width="1"/></svg>
<svg style="position:absolute;left:1158px;top:709px;" width="16" height="15" viewBox="0 0 16 15"><rect x="1.6" y="1.6" width="13" height="12" fill="none" stroke="#444" stroke-width="1.2"/><path d="M1.6 8.6 H9.8 V1.6 M4.2 1.6 V8.6 M6.7 1.6 V8.6" fill="none" stroke="#444" stroke-width="1.1"/></svg>
<div style="left:1191px;top:717px;width:9px;height:1.2px;background:#444;"></div>
<div style="left:1205px;top:717px;width:100px;height:1px;background:#a6a6a6;"></div>
<div style="left:1253px;top:712px;width:5px;height:11px;background:#777;"></div>
<div style="left:1310px;top:717px;width:8px;height:1.2px;background:#444;"></div>
<div style="left:1313.4px;top:713px;width:1.2px;height:9px;background:#444;"></div>
<span class="t" style="left:1331.70px;top:713.00px;font-size:11.5px;color:#444;transform:scaleX(0.9011);">100%</span>
<svg style="position:absolute;left:16px;top:740px;" width="18" height="17" viewBox="0 0 18 17"><path d="M0.5 2.2 L7.5 1.2 V8 H0.5 Z M8.8 1 L17 0 V8 H8.8 Z M0.5 9.2 H7.5 V15.8 L0.5 14.8 Z M8.8 9.2 H17 V17 L8.8 16 Z" fill="#fff"/></svg>
<div style="left:48px;top:728px;width:344px;height:40px;background:#f0f0f0;"></div>
<div style="left:48px;top:728px;width:344px;height:1px;background:#9a9a9a;"></div>
<svg style="position:absolute;left:59px;top:738px;" width="18" height="18" viewBox="0 0 18 18"><circle cx="10.8" cy="6.8" r="5.6" fill="none" stroke="#222" stroke-width="1.3"/><path d="M6.8 10.8 L1 16.6" stroke="#222" stroke-width="1.4"/></svg>
<span class="t" style="left:88.50px;top:741.20px;font-size:15.5px;color:#2b2b2b;transform:scaleX(0.9313);">Type here to search</span>
<svg style="position:absolute;left:407px;top:739px;" width="18" height="18" viewBox="0 0 18 18"><circle cx="9" cy="9" r="7" fill="none" stroke="#fff" stroke-width="1.7"/></svg>
<svg style="position:absolute;left:454px;top:739px;" width="20" height="18" viewBox="0 0 20 18"><rect x="1.5" y="4" width="11" height="9.5" fill="none" stroke="#fff" stroke-width="1.2"/><path d="M0 1.5 H14 M0 16 H14" stroke="#fff" stroke-width="1.2"/><path d="M16.5 0 V17" stroke="#fff" stroke-width="1.2"/><rect x="15.5" y="4" width="3" height="3" fill="#fff"/></svg>
<svg style="position:absolute;left:502px;top:736px;" width="26" height="24" viewBox="0 0 26 24"><path d="M1 9 L13 1 L25 9 V22 H1 Z" fill="#0f6cbd"/><path d="M3.5 6.5 H22.5 V14 L13 19 L3.5 14 Z" fill="#f3f3f3"/><path d="M1 9 L13 17 L25 9 V22 H1 Z" fill="#28a8ea"/><path d="M1 22 L13 13 L25 22 Z" fill="#50d9ff" opacity="0.6"/></svg>
<div style="left:495px;top:766px;width:40px;height:2px;background:#99d1ff;"></div>
<svg style="position:absolute;left:551px;top:736px;" width="26" height="25" viewBox="0 0 26 25"><path d="M13 1.5 C6 1.5 1.5 7 1.5 13 C1.5 19.5 6.5 23.5 12.5 23.5 C16.5 23.5 20 22 22.5 19.5 V14.5 C20 17.5 16.5 18.5 13.5 18.5 C9.5 18.5 7.5 16.5 7.5 14 H24 V11.5 C24 5.5 19.5 1.5 13 1.5 Z M8 10 C8.5 7 10.5 5.5 13.2 5.5 C16 5.5 18 7.5 18 10 Z" fill="#0b78d6"/></svg>
<svg style="position:absolute;left:600px;top:737px;" width="26" height="23" viewBox="0 0 26 23"><path d="M1 2.5 H9.5 L12 5 H25 V21 H1 Z" fill="#e5a72a"/><rect x="1" y="7" width="24" height="14" fill="#ffd55c"/><path d="M8 21 V14 H18 V21 H15.5 V16.5 H10.5 V21 Z" fill="#1f7ad4"/></svg>
<div style="left:593px;top:766px;width:40px;height:2px;background:#99d1ff;"></div>
<svg style="position:absolute;left:649px;top:736px;" width="26" height="26" viewBox="0 0 26 26"><circle cx="13" cy="13" r="12" fill="#db4437"/><path d="M13 13 L2.6 7 A12 12 0 0 0 7 23.4 Z" fill="#0f9d58"/><path d="M13 13 L7 23.4 A12 12 0 0 0 25 13 L19 13 Z" fill="#ffcd40"/><path d="M13 13 L2.6 7 A12 12 0 0 1 13 1 A12 12 0 0 1 23.4 7 Z" fill="#db4437"/><path d="M13 13 L23.4 7 A12 12 0 0 1 25 13 A12 12 0 0 1 13 25 L7 23.4 Z" fill="#ffcd40"/><path d="M13 13 L7 23.4 A12 12 0 0 1 1 13 A12 12 0 0 1 2.6 7 Z" fill="#0f9d58"/><circle cx="13" cy="13" r="5.6" fill="#fff"/><circle cx="13" cy="13" r="4.4" fill="#4285f4"/></svg>
<div style="left:642px;top:766px;width:40px;height:2px;background:#99d1ff;"></div>
<svg style="position:absolute;left:697px;top:736px;" width="28" height="28" viewBox="0 0 28 28"><circle cx="19" cy="5" r="3.3" fill="#7b83eb"/><circle cx="12.5" cy="4.5" r="3.8" fill="#5059c9"/><rect x="14" y="9" width="11" height="10" rx="3" fill="#7b83eb"/><rect x="7" y="9" width="12" height="13" rx="2" fill="#5059c9"/><rect x="1" y="7" width="13" height="13" rx="1.5" fill="#4b53bc"/><path d="M4 10.5 H11 M7.5 10.5 V17" stroke="#fff" stroke-width="1.8"/><circle cx="19.5" cy="20.5" r="7" fill="#c4314b"/><text x="14.5" y="24.5" font-family="Liberation Sans" font-size="9.5" font-weight="700" fill="#fff">9+</text></svg>
<div style="left:690px;top:766px;width:40px;height:2px;background:#99d1ff;"></div>
<svg style="position:absolute;left:747px;top:738px;" width="24" height="20" viewBox="0 0 24 20"><rect x="1" y="1" width="22" height="18" fill="#0c0c0c" stroke="#cfcfcf" stroke-width="1"/><rect x="1" y="1" width="22" height="2.5" fill="#cfcfcf"/><text x="3" y="10.5" font-family="Liberation Mono" font-size="6" fill="#fff">C:</text><path d="M13 10.5 H19" stroke="#fff" stroke-width="1"/></svg>
<div style="left:739px;top:766px;width:40px;height:2px;background:#99d1ff;"></div>
<svg style="position:absolute;left:797px;top:735px;" width="25" height="25" viewBox="0 0 25 25"><defs><radialGradient id="ag" cx="0.5" cy="0.7" r="0.7"><stop offset="0" stop-color="#22b0d8"/><stop offset="1" stop-color="#0b3d57"/></radialGradient></defs><circle cx="12.5" cy="12.5" r="11.5" fill="url(#ag)" stroke="#cfcfcf" stroke-width="1"/><path d="M6 20.5 C8.5 13 10.5 7 12.5 4 C14.5 7 16.5 13 19 20.5 M8.5 15.5 C11 14 14 14.5 18.5 18" fill="none" stroke="#e8f6fb" stroke-width="1.1"/></svg>
<div style="left:788px;top:766px;width:40px;height:2px;background:#99d1ff;"></div>
<div style="left:834px;top:728px;width:48px;height:40px;background:#3d3d3d;"></div>
<svg style="position:absolute;left:845px;top:737px;" width="26" height="23" viewBox="0 0 26 23"><rect x="7" y="1" width="18" height="21" rx="1.5" fill="#21a366"/><rect x="7" y="1" width="18" height="7" fill="#33c481"/><rect x="7" y="15" width="18" height="7" fill="#107c41"/><path d="M16 1 V22" stroke="#185c37" stroke-width="0.5" opacity="0.5"/><rect x="1" y="5.5" width="13" height="13" rx="1.5" fill="#107c41"/><path d="M4.2 8.5 L10.8 15.5 M10.8 8.5 L4.2 15.5" stroke="#fff" stroke-width="1.8"/></svg>
<div style="left:834px;top:766px;width:48px;height:2px;background:#99d1ff;"></div>
<svg style="position:absolute;left:1164px;top:743px;" width="15" height="10" viewBox="0 0 15 10"><path d="M1 8.5 L7.5 2 L14 8.5" fill="none" stroke="#fff" stroke-width="1.3"/></svg>
<svg style="position:absolute;left:1189px;top:742px;" width="16" height="15" viewBox="0 0 16 15"><path d="M2 13.5 A12 12 0 0 1 13.5 2 M4.5 13.5 A9 9 0 0 1 13.5 4.8 M7 13.5 A6.5 6.5 0 0 1 13.5 7.3" fill="none" stroke="#bdbdbd" stroke-width="1.1"/><circle cx="12.5" cy="12.5" r="1.8" fill="#fff"/></svg>
<span class="t" style="left:1213.30px;top:742.00px;font-size:12px;color:#fff;transform:scaleX(0.8726);">ENG</span>
<span class="t" style="left:1264.60px;top:733.20px;font-size:12px;color:#fff;transform:scaleX(0.8631);">14:03</span>
<span class="t" style="left:1249.00px;top:750.40px;font-size:12px;color:#fff;transform:scaleX(0.9237);">28-06-2021</span>
<svg style="position:absolute;left:1324px;top:739px;" width="19" height="19" viewBox="0 0 19 19"><path d="M1.2 1.2 H17.8 V13.5 H12 L9.5 16.5 L7 13.5 H1.2 Z" fill="none" stroke="#fff" stroke-width="1.2"/></svg>
<div style="left:1361px;top:728px;width:1px;height:40px;background:#5a5a5a;"></div>
</body></html>
